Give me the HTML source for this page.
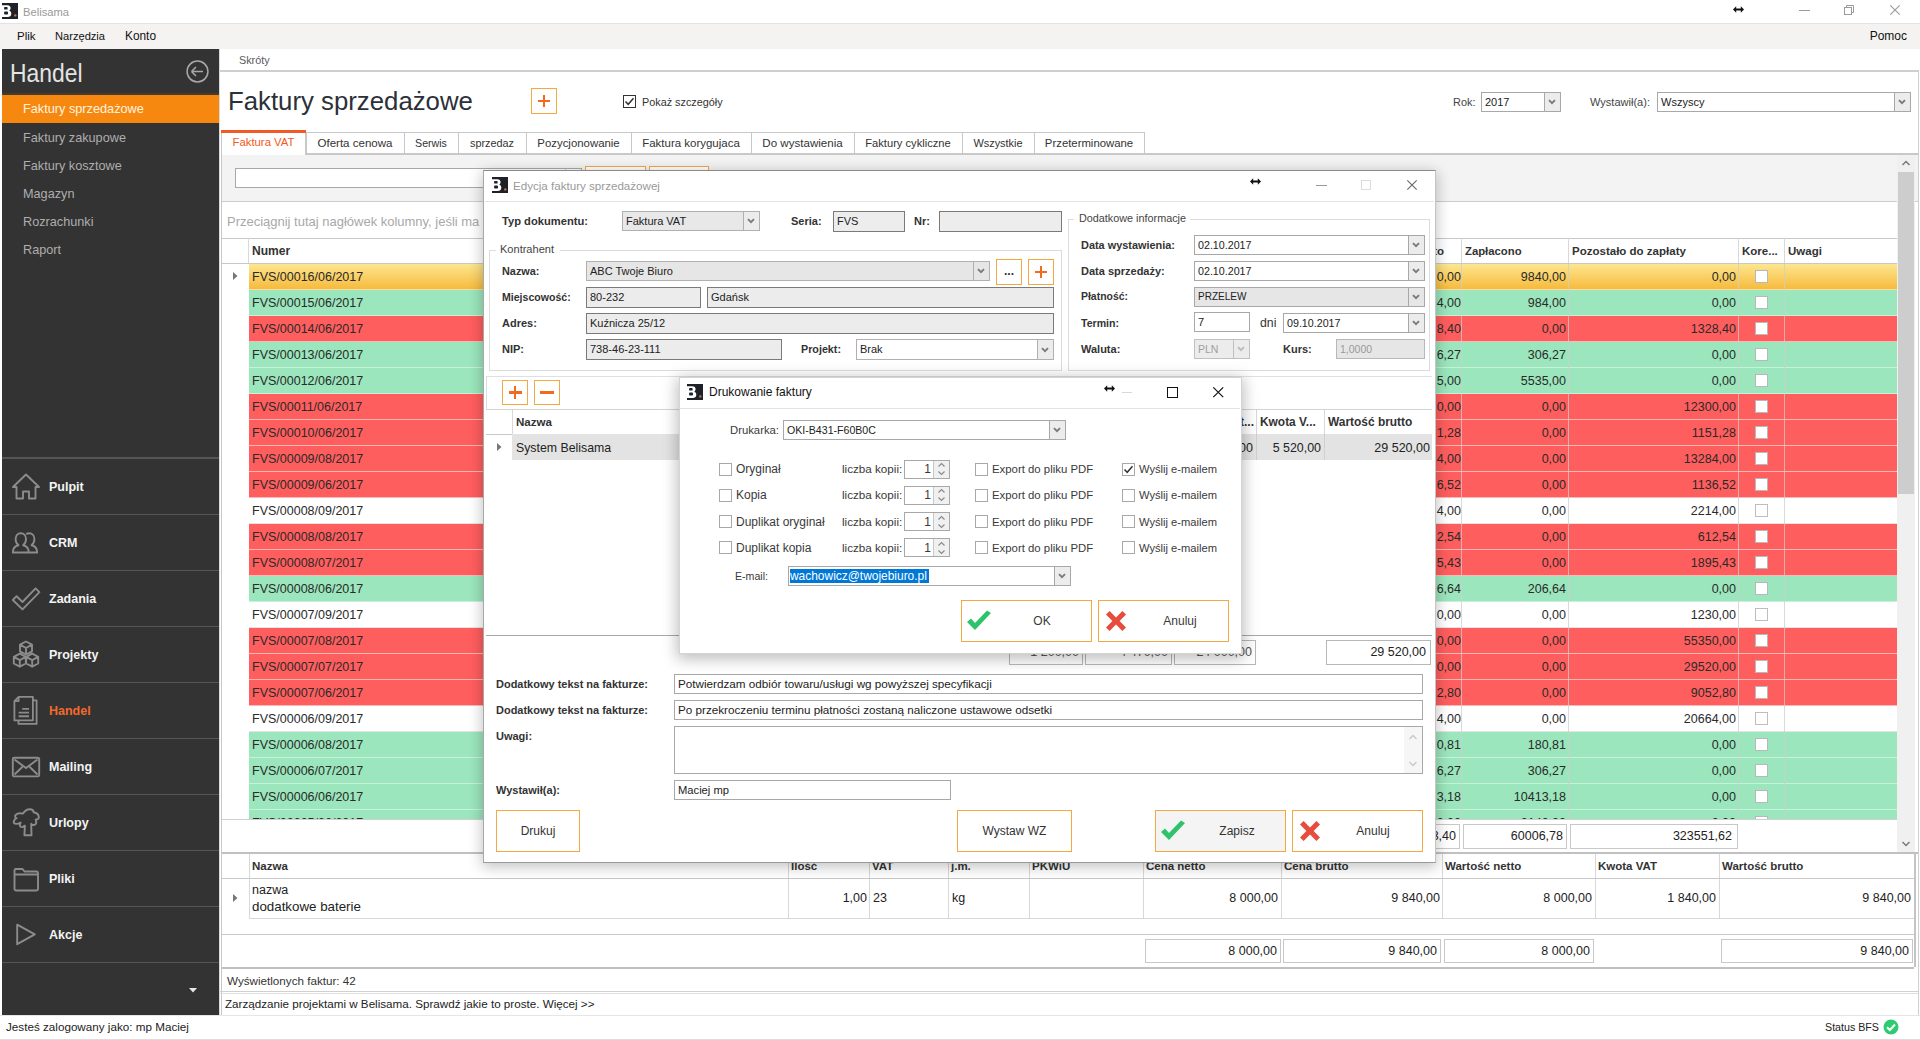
<!DOCTYPE html>
<html><head><meta charset="utf-8"><title>Belisama</title>
<style>
html,body{margin:0;padding:0;}
body{width:1920px;height:1040px;position:relative;overflow:hidden;background:#fff;font-family:"Liberation Sans", sans-serif;}
.r{position:absolute;}
.t{position:absolute;white-space:nowrap;font-family:"Liberation Sans", sans-serif;}
svg.r{overflow:visible;}
</style></head><body>
<div class="r" style="left:0px;top:0px;width:1920px;height:24px;background:#fff;"></div><div class="r" style="left:0px;top:23px;width:1920px;height:1px;background:#e3e3e3;"></div><svg class="r" style="left:2px;top:3px" width="16" height="16" viewBox="0 0 16 16"><rect width="16" height="16" fill="#1f2128"/><path d="M0 2.2 H5.2 C7.5 2.2 8.6 3.4 8.6 5 C8.6 6.2 8 7.1 7.1 7.6 C8.5 8 9.3 9.2 9.3 10.7 C9.3 12.8 7.8 13.9 5.6 13.9 H0 Z" fill="#fff"/><rect x="2.1" y="4" width="3.5" height="2.6" rx="0.7" fill="#1f2128"/><rect x="2.1" y="8.6" width="3.9" height="2.9" rx="0.8" fill="#1f2128"/><circle cx="13.3" cy="12.4" r="1.2" fill="#d0704a"/></svg><div class="t" style="left:23px;top:2.0px;height:20px;line-height:20px;font-size:11.18px;color:#9a9a9a;">Belisama</div><svg class="r" style="left:1733px;top:5.5px" width="11" height="7" viewBox="0 0 11 7"><path d="M0 3.5 L3.2 0.3 V2.4 H7.8 V0.3 L11 3.5 L7.8 6.7 V4.6 H3.2 V6.7 Z" fill="#111"/></svg><div class="r" style="left:1799px;top:10px;width:11px;height:1px;background:#9a9a9a;"></div><svg class="r" style="left:1844px;top:5px" width="10" height="10" viewBox="0 0 10 10"><rect x="0.5" y="2.5" width="7" height="7" fill="none" stroke="#9a9a9a"/><path d="M2.5 2.5 V0.5 H9.5 V7.5 H7.5" fill="none" stroke="#9a9a9a"/></svg><svg class="r" style="left:1890px;top:5px" width="10" height="10" viewBox="0 0 10 10"><path d="M0.3 0.3 L9.7 9.7 M9.7 0.3 L0.3 9.7" stroke="#9a9a9a" stroke-width="1.1"/></svg><div class="r" style="left:0px;top:24px;width:1920px;height:25px;background:#f4f3f1;"></div><div class="t" style="left:17px;top:26.0px;height:20px;line-height:20px;font-size:11.48px;color:#111;">Plik</div><div class="t" style="left:55px;top:26.0px;height:20px;line-height:20px;font-size:11.11px;color:#111;">Narzędzia</div><div class="t" style="left:125px;top:26.0px;height:20px;line-height:20px;font-size:11.86px;color:#111;">Konto</div><div class="t" style="right:13px;top:26.0px;height:20px;line-height:20px;font-size:12px;color:#111;">Pomoc</div><div class="r" style="left:2px;top:49px;width:217px;height:967px;background:#333333;"></div><div class="t" style="left:9.5px;top:58.0px;height:30px;line-height:30px;font-size:25px;color:#e4e4e4;transform:scaleX(0.915);transform-origin:0 0;">Handel</div><svg class="r" style="left:186px;top:60px" width="23" height="23" viewBox="0 0 23 23"><circle cx="11.5" cy="11.5" r="10.4" fill="none" stroke="#a8a8a8" stroke-width="1.5"/><path d="M5.5 11.5 H17 M5.5 11.5 L10 7 M5.5 11.5 L10 16" fill="none" stroke="#a8a8a8" stroke-width="1.5"/></svg><div class="r" style="left:2px;top:93px;width:217px;height:2px;background:#4a3a2e;"></div><div class="r" style="left:2px;top:95px;width:217px;height:28px;background:#f7880f;"></div><div class="t" style="left:23px;top:99.0px;height:20px;line-height:20px;font-size:12.73px;color:#fff4e0;">Faktury sprzedażowe</div><div class="t" style="left:23px;top:128.0px;height:20px;line-height:20px;font-size:12.7px;color:#aeaeae;">Faktury zakupowe</div><div class="t" style="left:23px;top:156.0px;height:20px;line-height:20px;font-size:12.7px;color:#aeaeae;">Faktury kosztowe</div><div class="t" style="left:23px;top:184.0px;height:20px;line-height:20px;font-size:12.7px;color:#aeaeae;">Magazyn</div><div class="t" style="left:23px;top:212.0px;height:20px;line-height:20px;font-size:12.7px;color:#aeaeae;">Rozrachunki</div><div class="t" style="left:23px;top:240.0px;height:20px;line-height:20px;font-size:12.7px;color:#aeaeae;">Raport</div><div class="r" style="left:2px;top:457px;width:217px;height:2px;background:#555555;"></div><svg class="r" style="left:12px;top:472px" width="28" height="28" viewBox="0 0 28 28"><path d="M14 2.5 L1 15 H4.5 V26.5 H11 V19.5 H17 V26.5 H23.5 V15 H27 Z" fill="none" stroke="#8c8c8c" stroke-width="1.9" stroke-linejoin="round"/></svg><div class="t" style="left:49px;top:477.0px;height:20px;line-height:20px;font-size:12.5px;color:#f4f4f4;font-weight:bold;">Pulpit</div><div class="r" style="left:2px;top:514px;width:217px;height:1px;background:#555555;"></div><svg class="r" style="left:12px;top:528px" width="28" height="28" viewBox="0 0 28 28"><path d="M0.8 24.5 C0.8 20 3 18 6.5 17.2 C4.6 15.8 3.6 13.8 3.6 11.2 C3.6 7.6 5.8 5.2 8.8 5.2 C11.8 5.2 14 7.6 14 11.2 C14 13.8 13 15.8 11.1 17.2 C14.6 18 16.8 20 16.8 24.5 Z" fill="none" stroke="#8c8c8c" stroke-width="1.9" stroke-linejoin="round"/><path d="M14.2 6.2 C15 5.5 16 5.2 17.2 5.2 C20.2 5.2 22.4 7.6 22.4 11.2 C22.4 13.8 21.4 15.8 19.5 17.2 C23 18 25.2 20 25.2 24.5 H16.8" fill="none" stroke="#8c8c8c" stroke-width="1.9" stroke-linejoin="round"/></svg><div class="t" style="left:49px;top:533.0px;height:20px;line-height:20px;font-size:12.5px;color:#f4f4f4;font-weight:bold;">CRM</div><div class="r" style="left:2px;top:570px;width:217px;height:1px;background:#555555;"></div><svg class="r" style="left:12px;top:584px" width="28" height="28" viewBox="0 0 28 28"><path d="M0.8 16 L4.6 12.2 L10.5 18 L23.6 4.4 L27.4 8.2 L10.5 25.4 Z" fill="none" stroke="#8c8c8c" stroke-width="1.9" stroke-linejoin="round"/></svg><div class="t" style="left:49px;top:589.0px;height:20px;line-height:20px;font-size:12.5px;color:#f4f4f4;font-weight:bold;">Zadania</div><div class="r" style="left:2px;top:626px;width:217px;height:1px;background:#555555;"></div><svg class="r" style="left:12px;top:640px" width="28" height="28" viewBox="0 0 28 28"><path d="M14 1.5 L20 4.7 V11.3 L14 14.5 L8 11.3 V4.7 Z M8 4.7 L14 8 L20 4.7 M14 8 V14.5 M7.8 13.7 L13.8 16.9 V23.5 L7.8 26.7 L1.7999999999999998 23.5 V16.9 Z M1.7999999999999998 16.9 L7.8 20.2 L13.8 16.9 M7.8 20.2 V26.7 M20.2 13.7 L26.2 16.9 V23.5 L20.2 26.7 L14.2 23.5 V16.9 Z M14.2 16.9 L20.2 20.2 L26.2 16.9 M20.2 20.2 V26.7" fill="none" stroke="#8c8c8c" stroke-width="1.9" stroke-linejoin="round"/></svg><div class="t" style="left:49px;top:645.0px;height:20px;line-height:20px;font-size:12.5px;color:#f4f4f4;font-weight:bold;">Projekty</div><div class="r" style="left:2px;top:682px;width:217px;height:1px;background:#555555;"></div><svg class="r" style="left:12px;top:696px" width="28" height="28" viewBox="0 0 28 28"><path d="M6.6 0.9 H20.9 V24.4 H2.4 V5.1 Z M2.4 5.1 H6.6 V0.9" fill="none" stroke="#8c8c8c" stroke-width="1.8" stroke-linejoin="round"/><path d="M20.9 4.3 H24.6 V27.9 H6.5 V24.4" fill="none" stroke="#8c8c8c" stroke-width="1.8" stroke-linejoin="round"/><path d="M10.2 12.9 H17 M6.6 16.6 H17 M6.6 20.3 H17" stroke="#8c8c8c" stroke-width="1.9"/></svg><div class="t" style="left:49px;top:701.0px;height:20px;line-height:20px;font-size:12.5px;color:#f26a2a;font-weight:bold;">Handel</div><div class="r" style="left:2px;top:738px;width:217px;height:1px;background:#555555;"></div><svg class="r" style="left:12px;top:752px" width="28" height="28" viewBox="0 0 28 28"><rect x="0.8" y="5.8" width="26.4" height="18.6" rx="1.5" fill="none" stroke="#8c8c8c" stroke-width="1.9"/><path d="M2.5 7.5 L14 16 L25.5 7.5 M2.5 22.5 L10.5 14.8 M25.5 22.5 L17.5 14.8" fill="none" stroke="#8c8c8c" stroke-width="1.9"/></svg><div class="t" style="left:49px;top:757.0px;height:20px;line-height:20px;font-size:12.5px;color:#f4f4f4;font-weight:bold;">Mailing</div><div class="r" style="left:2px;top:794px;width:217px;height:1px;background:#555555;"></div><svg class="r" style="left:12px;top:808px" width="28" height="28" viewBox="0 0 28 28"><path d="M12.4 27.2 L12.9 17.6 C11.2 18.8 9.4 19.6 8.4 18.6 C7.4 17.4 7.8 15.8 8.6 14.6 C6.2 15.8 3.2 16.2 2 15 C1 13.6 2.4 11.2 4.6 10.2 C3 9.6 2.6 8 3.6 7 C5.2 5.4 8.2 5 11 5.6 C12.6 3 15 1.2 17.6 1.2 C20 1.2 21.6 2.6 21.6 4.2 C24.2 4.6 26.6 6.6 26.8 9 C27 11 25.2 11.6 23.6 11.6 C24.6 13.2 24.6 15.6 23 16.6 C21.6 17.6 20.2 16.8 19.2 15.8 L19.5 27.2 Z" fill="none" stroke="#8c8c8c" stroke-width="1.9" stroke-linejoin="round"/></svg><div class="t" style="left:49px;top:813.0px;height:20px;line-height:20px;font-size:12.5px;color:#f4f4f4;font-weight:bold;">Urlopy</div><div class="r" style="left:2px;top:850px;width:217px;height:1px;background:#555555;"></div><svg class="r" style="left:12px;top:864px" width="28" height="28" viewBox="0 0 28 28"><path d="M2.5 6.5 Q2.5 5 4 5 H10.5 L12.5 7.5 H24.5 Q26 7.5 26 9 V25 Q26 26.5 24.5 26.5 H4 Q2.5 26.5 2.5 25 Z M2.5 10.5 H26" fill="none" stroke="#8c8c8c" stroke-width="1.9" stroke-linejoin="round"/></svg><div class="t" style="left:49px;top:869.0px;height:20px;line-height:20px;font-size:12.5px;color:#f4f4f4;font-weight:bold;">Pliki</div><div class="r" style="left:2px;top:906px;width:217px;height:1px;background:#555555;"></div><svg class="r" style="left:12px;top:920px" width="28" height="28" viewBox="0 0 28 28"><path d="M5.2 4.6 L22.8 14.4 L5.2 24.2 Z" fill="none" stroke="#8c8c8c" stroke-width="1.9" stroke-linejoin="round"/></svg><div class="t" style="left:49px;top:925.0px;height:20px;line-height:20px;font-size:12.5px;color:#f4f4f4;font-weight:bold;">Akcje</div><div class="r" style="left:2px;top:962px;width:217px;height:1px;background:#555555;"></div><svg class="r" style="left:189px;top:988px" width="8" height="5" viewBox="0 0 8 5"><path d="M0 0 H8 L4 4.5 Z" fill="#e8e8e8"/></svg><div class="r" style="left:0px;top:1015px;width:1920px;height:25px;background:#fff;"></div><div class="r" style="left:0px;top:1015px;width:1920px;height:1px;background:#e6e6e6;"></div><div class="r" style="left:0px;top:1039px;width:1920px;height:1px;background:#dcdcdc;"></div><div class="t" style="left:6px;top:1017.0px;height:20px;line-height:20px;font-size:11.68px;color:#222;">Jesteś zalogowany jako: mp Maciej</div><div class="t" style="right:41px;top:1017.0px;height:20px;line-height:20px;font-size:10.68px;color:#222;">Status BFS</div><svg class="r" style="left:1883px;top:1019px" width="16" height="16" viewBox="0 0 16 16"><circle cx="8" cy="8" r="7.5" fill="#2ecc71"/><path d="M4 8.2 L6.8 11 L12 5.5" fill="none" stroke="#fff" stroke-width="2"/></svg><div class="r" style="left:219px;top:49px;width:1701px;height:966px;background:#fff;"></div><div class="r" style="left:219px;top:49px;width:1px;height:966px;background:#d9d9d9;"></div><div class="t" style="left:239px;top:50.0px;height:20px;line-height:20px;font-size:10.8px;color:#5a5a5a;">Skróty</div><div class="r" style="left:220px;top:70px;width:1698px;height:2px;background:#cfcfcf;"></div><div class="r" style="left:1918px;top:70px;width:1px;height:945px;background:#d0d0d0;"></div><div class="t" style="left:228px;top:84.0px;height:34px;line-height:34px;font-size:25.78px;color:#2c3038;">Faktury sprzedażowe</div><div class="r" style="left:531px;top:88px;width:26px;height:26px;background:#fff;border:1px solid #f2a941;box-sizing:border-box;"></div><div class="r" style="left:538.0px;top:99.9px;width:12.0px;height:2.1999999999999886px;background:#f26a1b;"></div><div class="r" style="left:542.9px;top:95.0px;width:2.2000000000000455px;height:12.0px;background:#f26a1b;"></div><div class="r" style="left:623px;top:95px;width:13px;height:13px;background:#fff;border:1px solid #333;box-sizing:border-box;"></div><svg class="r" style="left:623px;top:95px" width="13" height="13" viewBox="0 0 13 13"><path d="M2.5 6.5 L5.2 9.3 L10.5 3.2" fill="none" stroke="#333" stroke-width="1.5"/></svg><div class="t" style="left:642px;top:91.5px;height:20px;line-height:20px;font-size:10.84px;color:#333;">Pokaż szczegóły</div><div class="t" style="left:1453px;top:91.5px;height:20px;line-height:20px;font-size:10.94px;color:#444;">Rok:</div><div class="r" style="left:1481px;top:92px;width:80px;height:20px;background:#fff;border:1px solid #a8a8a8;box-sizing:border-box;"></div><div class="r" style="left:1544px;top:93px;width:16px;height:18px;background:#ececec;border-left:1px solid #a8a8a8;box-sizing:border-box;"></div><svg class="r" style="left:1547.0px;top:98.0px" width="10" height="8" viewBox="0 0 10 8"><path d="M2 2.2 L5 5.2 L8 2.2" fill="none" stroke="#7a7a7a" stroke-width="1.9"/></svg><div class="t" style="left:1485px;top:92.0px;height:20px;line-height:20px;font-size:11px;color:#222;">2017</div><div class="t" style="left:1590px;top:91.5px;height:20px;line-height:20px;font-size:11.04px;color:#444;">Wystawił(a):</div><div class="r" style="left:1657px;top:92px;width:254px;height:20px;background:#fff;border:1px solid #a8a8a8;box-sizing:border-box;"></div><div class="r" style="left:1894px;top:93px;width:16px;height:18px;background:#ececec;border-left:1px solid #a8a8a8;box-sizing:border-box;"></div><svg class="r" style="left:1897.0px;top:98.0px" width="10" height="8" viewBox="0 0 10 8"><path d="M2 2.2 L5 5.2 L8 2.2" fill="none" stroke="#7a7a7a" stroke-width="1.9"/></svg><div class="t" style="left:1661px;top:92.0px;height:20px;line-height:20px;font-size:11px;color:#222;">Wszyscy</div><div class="r" style="left:221px;top:130px;width:85px;height:25px;background:#fff;border-left:1px solid #c8c8c8;border-right:1px solid #c8c8c8;box-sizing:border-box;"></div><div class="r" style="left:221px;top:130px;width:85px;height:3px;background:#f15a22;"></div><div class="t" style="left:263.5px;top:132.0px;height:20px;line-height:20px;font-size:11.35px;color:#f15a22;transform:translateX(-50%);">Faktura VAT</div><div class="r" style="left:306px;top:132px;width:99px;height:22px;background:#fff;border:1px solid #c8c8c8;border-bottom:none;box-sizing:border-box;"></div><div class="t" style="left:355.0px;top:133.0px;height:20px;line-height:20px;font-size:11.56px;color:#333;transform:translateX(-50%);">Oferta cenowa</div><div class="r" style="left:404px;top:132px;width:55px;height:22px;background:#fff;border:1px solid #c8c8c8;border-bottom:none;box-sizing:border-box;"></div><div class="t" style="left:431.0px;top:133.0px;height:20px;line-height:20px;font-size:10.63px;color:#333;transform:translateX(-50%);">Serwis</div><div class="r" style="left:458px;top:132px;width:69px;height:22px;background:#fff;border:1px solid #c8c8c8;border-bottom:none;box-sizing:border-box;"></div><div class="t" style="left:492.0px;top:133.0px;height:20px;line-height:20px;font-size:10.84px;color:#333;transform:translateX(-50%);">sprzedaz</div><div class="r" style="left:526px;top:132px;width:106px;height:22px;background:#fff;border:1px solid #c8c8c8;border-bottom:none;box-sizing:border-box;"></div><div class="t" style="left:578.5px;top:133.0px;height:20px;line-height:20px;font-size:11.42px;color:#333;transform:translateX(-50%);">Pozycjonowanie</div><div class="r" style="left:631px;top:132px;width:121px;height:22px;background:#fff;border:1px solid #c8c8c8;border-bottom:none;box-sizing:border-box;"></div><div class="t" style="left:691.0px;top:133.0px;height:20px;line-height:20px;font-size:11.48px;color:#333;transform:translateX(-50%);">Faktura korygujaca</div><div class="r" style="left:751px;top:132px;width:104px;height:22px;background:#fff;border:1px solid #c8c8c8;border-bottom:none;box-sizing:border-box;"></div><div class="t" style="left:802.5px;top:133.0px;height:20px;line-height:20px;font-size:11.57px;color:#333;transform:translateX(-50%);">Do wystawienia</div><div class="r" style="left:854px;top:132px;width:109px;height:22px;background:#fff;border:1px solid #c8c8c8;border-bottom:none;box-sizing:border-box;"></div><div class="t" style="left:908.0px;top:133.0px;height:20px;line-height:20px;font-size:11.15px;color:#333;transform:translateX(-50%);">Faktury cykliczne</div><div class="r" style="left:962px;top:132px;width:73px;height:22px;background:#fff;border:1px solid #c8c8c8;border-bottom:none;box-sizing:border-box;"></div><div class="t" style="left:998.0px;top:133.0px;height:20px;line-height:20px;font-size:10.93px;color:#333;transform:translateX(-50%);">Wszystkie</div><div class="r" style="left:1034px;top:132px;width:111px;height:22px;background:#fff;border:1px solid #c8c8c8;border-bottom:none;box-sizing:border-box;"></div><div class="t" style="left:1089.0px;top:133.0px;height:20px;line-height:20px;font-size:11.35px;color:#333;transform:translateX(-50%);">Przeterminowane</div><div class="r" style="left:306px;top:153px;width:1612px;height:2px;background:#c8c8c8;"></div><div class="r" style="left:221px;top:155px;width:1px;height:860px;background:#c8c8c8;"></div><div class="r" style="left:222px;top:155px;width:1696px;height:46px;background:#f3f3f3;"></div><div class="r" style="left:222px;top:201px;width:1696px;height:1px;background:#cdcdcd;"></div><div class="r" style="left:235px;top:168px;width:347px;height:20px;background:#fff;border:1px solid #a8a8a8;box-sizing:border-box;"></div><div class="r" style="left:565px;top:169px;width:1px;height:18px;background:#c8c8c8;"></div><div class="r" style="left:585px;top:166px;width:61px;height:24px;background:#fff;border:1px solid #f2a941;box-sizing:border-box;"></div><div class="r" style="left:649px;top:166px;width:60px;height:24px;background:#fff;border:1px solid #f2a941;box-sizing:border-box;"></div><div class="t" style="left:227px;top:212.0px;height:20px;line-height:20px;font-size:12.99px;color:#a8a8a8;">Przeciągnij tutaj nagłówek kolumny, jeśli ma</div><div class="r" style="left:222px;top:238px;width:1675px;height:1px;background:#c8c8c8;"></div><div class="t" style="left:252px;top:241.0px;height:20px;line-height:20px;font-size:12.06px;color:#333;font-weight:bold;">Numer</div><div class="r" style="left:248px;top:238px;width:1px;height:25px;background:#d8d8d8;"></div><div class="r" style="left:1461px;top:238px;width:1px;height:25px;background:#d8d8d8;"></div><div class="r" style="left:1568px;top:238px;width:1px;height:25px;background:#d8d8d8;"></div><div class="r" style="left:1738px;top:238px;width:1px;height:25px;background:#d8d8d8;"></div><div class="r" style="left:1784px;top:238px;width:1px;height:25px;background:#d8d8d8;"></div><div class="t" style="right:476px;top:241.0px;height:20px;line-height:20px;font-size:11.5px;color:#333;font-weight:bold;">Wartość brutto</div><div class="t" style="left:1465px;top:241.0px;height:20px;line-height:20px;font-size:11.32px;color:#333;font-weight:bold;">Zapłacono</div><div class="t" style="left:1572px;top:241.0px;height:20px;line-height:20px;font-size:11.53px;color:#333;font-weight:bold;">Pozostało do zapłaty</div><div class="t" style="left:1742px;top:241.0px;height:20px;line-height:20px;font-size:11.5px;color:#333;font-weight:bold;">Kore...</div><div class="t" style="left:1788px;top:241.0px;height:20px;line-height:20px;font-size:11.5px;color:#333;font-weight:bold;">Uwagi</div><div class="r" style="left:222px;top:263px;width:1675px;height:1px;background:#c8c8c8;"></div><div class="r" style="left:222px;top:264px;width:1675px;height:555px;overflow:hidden;"><div class="r" style="left:27px;top:0px;width:1648px;height:26px;background:linear-gradient(#fde68f,#f6b93a);"></div><div class="r" style="left:27px;top:25px;width:1648px;height:1px;background:rgba(255,255,255,0.5);"></div><div class="t" style="left:30px;top:3px;height:20px;line-height:20px;font-size:12.5px;color:#2a2a2a;">FVS/00016/06/2017</div><div class="t" style="left:1129px;width:110px;text-align:right;top:3px;height:20px;line-height:20px;font-size:12.5px;color:#2a2a2a;">0,00</div><div class="t" style="left:1239px;width:105px;text-align:right;top:3px;height:20px;line-height:20px;font-size:12.5px;color:#2a2a2a;">9840,00</div><div class="t" style="left:1346px;width:168px;text-align:right;top:3px;height:20px;line-height:20px;font-size:12.5px;color:#2a2a2a;">0,00</div><div class="r" style="left:1533px;top:6px;width:13px;height:13px;background:#fff;border:1px solid #b8b8b8;box-sizing:border-box;"></div><div class="r" style="left:1239px;top:0px;width:1px;height:26px;background:rgba(205,205,205,0.75);"></div><div class="r" style="left:1346px;top:0px;width:1px;height:26px;background:rgba(205,205,205,0.75);"></div><div class="r" style="left:1516px;top:0px;width:1px;height:26px;background:rgba(205,205,205,0.75);"></div><div class="r" style="left:1562px;top:0px;width:1px;height:26px;background:rgba(205,205,205,0.75);"></div><div class="r" style="left:27px;top:26px;width:1648px;height:26px;background:#9be6bc;"></div><div class="r" style="left:27px;top:51px;width:1648px;height:1px;background:rgba(255,255,255,0.45);"></div><div class="t" style="left:30px;top:29px;height:20px;line-height:20px;font-size:12.5px;color:#2a2a2a;">FVS/00015/06/2017</div><div class="t" style="left:1129px;width:110px;text-align:right;top:29px;height:20px;line-height:20px;font-size:12.5px;color:#2a2a2a;">4,00</div><div class="t" style="left:1239px;width:105px;text-align:right;top:29px;height:20px;line-height:20px;font-size:12.5px;color:#2a2a2a;">984,00</div><div class="t" style="left:1346px;width:168px;text-align:right;top:29px;height:20px;line-height:20px;font-size:12.5px;color:#2a2a2a;">0,00</div><div class="r" style="left:1533px;top:32px;width:13px;height:13px;background:#fff;border:1px solid #b8b8b8;box-sizing:border-box;"></div><div class="r" style="left:1239px;top:26px;width:1px;height:26px;background:rgba(205,205,205,0.75);"></div><div class="r" style="left:1346px;top:26px;width:1px;height:26px;background:rgba(205,205,205,0.75);"></div><div class="r" style="left:1516px;top:26px;width:1px;height:26px;background:rgba(205,205,205,0.75);"></div><div class="r" style="left:1562px;top:26px;width:1px;height:26px;background:rgba(205,205,205,0.75);"></div><div class="r" style="left:27px;top:52px;width:1648px;height:26px;background:#ff5e5e;"></div><div class="r" style="left:27px;top:77px;width:1648px;height:1px;background:rgba(255,255,255,0.55);"></div><div class="t" style="left:30px;top:55px;height:20px;line-height:20px;font-size:12.5px;color:#2a2a2a;">FVS/00014/06/2017</div><div class="t" style="left:1129px;width:110px;text-align:right;top:55px;height:20px;line-height:20px;font-size:12.5px;color:#2a2a2a;">8,40</div><div class="t" style="left:1239px;width:105px;text-align:right;top:55px;height:20px;line-height:20px;font-size:12.5px;color:#2a2a2a;">0,00</div><div class="t" style="left:1346px;width:168px;text-align:right;top:55px;height:20px;line-height:20px;font-size:12.5px;color:#2a2a2a;">1328,40</div><div class="r" style="left:1533px;top:58px;width:13px;height:13px;background:#fff;border:1px solid #b8b8b8;box-sizing:border-box;"></div><div class="r" style="left:1239px;top:52px;width:1px;height:26px;background:rgba(205,205,205,0.75);"></div><div class="r" style="left:1346px;top:52px;width:1px;height:26px;background:rgba(205,205,205,0.75);"></div><div class="r" style="left:1516px;top:52px;width:1px;height:26px;background:rgba(205,205,205,0.75);"></div><div class="r" style="left:1562px;top:52px;width:1px;height:26px;background:rgba(205,205,205,0.75);"></div><div class="r" style="left:27px;top:78px;width:1648px;height:26px;background:#9be6bc;"></div><div class="r" style="left:27px;top:103px;width:1648px;height:1px;background:rgba(255,255,255,0.45);"></div><div class="t" style="left:30px;top:81px;height:20px;line-height:20px;font-size:12.5px;color:#2a2a2a;">FVS/00013/06/2017</div><div class="t" style="left:1129px;width:110px;text-align:right;top:81px;height:20px;line-height:20px;font-size:12.5px;color:#2a2a2a;">6,27</div><div class="t" style="left:1239px;width:105px;text-align:right;top:81px;height:20px;line-height:20px;font-size:12.5px;color:#2a2a2a;">306,27</div><div class="t" style="left:1346px;width:168px;text-align:right;top:81px;height:20px;line-height:20px;font-size:12.5px;color:#2a2a2a;">0,00</div><div class="r" style="left:1533px;top:84px;width:13px;height:13px;background:#fff;border:1px solid #b8b8b8;box-sizing:border-box;"></div><div class="r" style="left:1239px;top:78px;width:1px;height:26px;background:rgba(205,205,205,0.75);"></div><div class="r" style="left:1346px;top:78px;width:1px;height:26px;background:rgba(205,205,205,0.75);"></div><div class="r" style="left:1516px;top:78px;width:1px;height:26px;background:rgba(205,205,205,0.75);"></div><div class="r" style="left:1562px;top:78px;width:1px;height:26px;background:rgba(205,205,205,0.75);"></div><div class="r" style="left:27px;top:104px;width:1648px;height:26px;background:#9be6bc;"></div><div class="r" style="left:27px;top:129px;width:1648px;height:1px;background:rgba(255,255,255,0.45);"></div><div class="t" style="left:30px;top:107px;height:20px;line-height:20px;font-size:12.5px;color:#2a2a2a;">FVS/00012/06/2017</div><div class="t" style="left:1129px;width:110px;text-align:right;top:107px;height:20px;line-height:20px;font-size:12.5px;color:#2a2a2a;">5,00</div><div class="t" style="left:1239px;width:105px;text-align:right;top:107px;height:20px;line-height:20px;font-size:12.5px;color:#2a2a2a;">5535,00</div><div class="t" style="left:1346px;width:168px;text-align:right;top:107px;height:20px;line-height:20px;font-size:12.5px;color:#2a2a2a;">0,00</div><div class="r" style="left:1533px;top:110px;width:13px;height:13px;background:#fff;border:1px solid #b8b8b8;box-sizing:border-box;"></div><div class="r" style="left:1239px;top:104px;width:1px;height:26px;background:rgba(205,205,205,0.75);"></div><div class="r" style="left:1346px;top:104px;width:1px;height:26px;background:rgba(205,205,205,0.75);"></div><div class="r" style="left:1516px;top:104px;width:1px;height:26px;background:rgba(205,205,205,0.75);"></div><div class="r" style="left:1562px;top:104px;width:1px;height:26px;background:rgba(205,205,205,0.75);"></div><div class="r" style="left:27px;top:130px;width:1648px;height:26px;background:#ff5e5e;"></div><div class="r" style="left:27px;top:155px;width:1648px;height:1px;background:rgba(255,255,255,0.55);"></div><div class="t" style="left:30px;top:133px;height:20px;line-height:20px;font-size:12.5px;color:#2a2a2a;">FVS/00011/06/2017</div><div class="t" style="left:1129px;width:110px;text-align:right;top:133px;height:20px;line-height:20px;font-size:12.5px;color:#2a2a2a;">0,00</div><div class="t" style="left:1239px;width:105px;text-align:right;top:133px;height:20px;line-height:20px;font-size:12.5px;color:#2a2a2a;">0,00</div><div class="t" style="left:1346px;width:168px;text-align:right;top:133px;height:20px;line-height:20px;font-size:12.5px;color:#2a2a2a;">12300,00</div><div class="r" style="left:1533px;top:136px;width:13px;height:13px;background:#fff;border:1px solid #b8b8b8;box-sizing:border-box;"></div><div class="r" style="left:1239px;top:130px;width:1px;height:26px;background:rgba(205,205,205,0.75);"></div><div class="r" style="left:1346px;top:130px;width:1px;height:26px;background:rgba(205,205,205,0.75);"></div><div class="r" style="left:1516px;top:130px;width:1px;height:26px;background:rgba(205,205,205,0.75);"></div><div class="r" style="left:1562px;top:130px;width:1px;height:26px;background:rgba(205,205,205,0.75);"></div><div class="r" style="left:27px;top:156px;width:1648px;height:26px;background:#ff5e5e;"></div><div class="r" style="left:27px;top:181px;width:1648px;height:1px;background:rgba(255,255,255,0.55);"></div><div class="t" style="left:30px;top:159px;height:20px;line-height:20px;font-size:12.5px;color:#2a2a2a;">FVS/00010/06/2017</div><div class="t" style="left:1129px;width:110px;text-align:right;top:159px;height:20px;line-height:20px;font-size:12.5px;color:#2a2a2a;">1,28</div><div class="t" style="left:1239px;width:105px;text-align:right;top:159px;height:20px;line-height:20px;font-size:12.5px;color:#2a2a2a;">0,00</div><div class="t" style="left:1346px;width:168px;text-align:right;top:159px;height:20px;line-height:20px;font-size:12.5px;color:#2a2a2a;">1151,28</div><div class="r" style="left:1533px;top:162px;width:13px;height:13px;background:#fff;border:1px solid #b8b8b8;box-sizing:border-box;"></div><div class="r" style="left:1239px;top:156px;width:1px;height:26px;background:rgba(205,205,205,0.75);"></div><div class="r" style="left:1346px;top:156px;width:1px;height:26px;background:rgba(205,205,205,0.75);"></div><div class="r" style="left:1516px;top:156px;width:1px;height:26px;background:rgba(205,205,205,0.75);"></div><div class="r" style="left:1562px;top:156px;width:1px;height:26px;background:rgba(205,205,205,0.75);"></div><div class="r" style="left:27px;top:182px;width:1648px;height:26px;background:#ff5e5e;"></div><div class="r" style="left:27px;top:207px;width:1648px;height:1px;background:rgba(255,255,255,0.55);"></div><div class="t" style="left:30px;top:185px;height:20px;line-height:20px;font-size:12.5px;color:#2a2a2a;">FVS/00009/08/2017</div><div class="t" style="left:1129px;width:110px;text-align:right;top:185px;height:20px;line-height:20px;font-size:12.5px;color:#2a2a2a;">4,00</div><div class="t" style="left:1239px;width:105px;text-align:right;top:185px;height:20px;line-height:20px;font-size:12.5px;color:#2a2a2a;">0,00</div><div class="t" style="left:1346px;width:168px;text-align:right;top:185px;height:20px;line-height:20px;font-size:12.5px;color:#2a2a2a;">13284,00</div><div class="r" style="left:1533px;top:188px;width:13px;height:13px;background:#fff;border:1px solid #b8b8b8;box-sizing:border-box;"></div><div class="r" style="left:1239px;top:182px;width:1px;height:26px;background:rgba(205,205,205,0.75);"></div><div class="r" style="left:1346px;top:182px;width:1px;height:26px;background:rgba(205,205,205,0.75);"></div><div class="r" style="left:1516px;top:182px;width:1px;height:26px;background:rgba(205,205,205,0.75);"></div><div class="r" style="left:1562px;top:182px;width:1px;height:26px;background:rgba(205,205,205,0.75);"></div><div class="r" style="left:27px;top:208px;width:1648px;height:26px;background:#ff5e5e;"></div><div class="r" style="left:27px;top:233px;width:1648px;height:1px;background:rgba(255,255,255,0.55);"></div><div class="t" style="left:30px;top:211px;height:20px;line-height:20px;font-size:12.5px;color:#2a2a2a;">FVS/00009/06/2017</div><div class="t" style="left:1129px;width:110px;text-align:right;top:211px;height:20px;line-height:20px;font-size:12.5px;color:#2a2a2a;">6,52</div><div class="t" style="left:1239px;width:105px;text-align:right;top:211px;height:20px;line-height:20px;font-size:12.5px;color:#2a2a2a;">0,00</div><div class="t" style="left:1346px;width:168px;text-align:right;top:211px;height:20px;line-height:20px;font-size:12.5px;color:#2a2a2a;">1136,52</div><div class="r" style="left:1533px;top:214px;width:13px;height:13px;background:#fff;border:1px solid #b8b8b8;box-sizing:border-box;"></div><div class="r" style="left:1239px;top:208px;width:1px;height:26px;background:rgba(205,205,205,0.75);"></div><div class="r" style="left:1346px;top:208px;width:1px;height:26px;background:rgba(205,205,205,0.75);"></div><div class="r" style="left:1516px;top:208px;width:1px;height:26px;background:rgba(205,205,205,0.75);"></div><div class="r" style="left:1562px;top:208px;width:1px;height:26px;background:rgba(205,205,205,0.75);"></div><div class="r" style="left:27px;top:234px;width:1648px;height:26px;background:#fff;"></div><div class="r" style="left:27px;top:259px;width:1648px;height:1px;background:#e4e4e4;"></div><div class="t" style="left:30px;top:237px;height:20px;line-height:20px;font-size:12.5px;color:#2a2a2a;">FVS/00008/09/2017</div><div class="t" style="left:1129px;width:110px;text-align:right;top:237px;height:20px;line-height:20px;font-size:12.5px;color:#2a2a2a;">4,00</div><div class="t" style="left:1239px;width:105px;text-align:right;top:237px;height:20px;line-height:20px;font-size:12.5px;color:#2a2a2a;">0,00</div><div class="t" style="left:1346px;width:168px;text-align:right;top:237px;height:20px;line-height:20px;font-size:12.5px;color:#2a2a2a;">2214,00</div><div class="r" style="left:1533px;top:240px;width:13px;height:13px;background:#fff;border:1px solid #bdbdbd;box-sizing:border-box;"></div><div class="r" style="left:1239px;top:234px;width:1px;height:26px;background:rgba(205,205,205,0.75);"></div><div class="r" style="left:1346px;top:234px;width:1px;height:26px;background:rgba(205,205,205,0.75);"></div><div class="r" style="left:1516px;top:234px;width:1px;height:26px;background:rgba(205,205,205,0.75);"></div><div class="r" style="left:1562px;top:234px;width:1px;height:26px;background:rgba(205,205,205,0.75);"></div><div class="r" style="left:27px;top:260px;width:1648px;height:26px;background:#ff5e5e;"></div><div class="r" style="left:27px;top:285px;width:1648px;height:1px;background:rgba(255,255,255,0.55);"></div><div class="t" style="left:30px;top:263px;height:20px;line-height:20px;font-size:12.5px;color:#2a2a2a;">FVS/00008/08/2017</div><div class="t" style="left:1129px;width:110px;text-align:right;top:263px;height:20px;line-height:20px;font-size:12.5px;color:#2a2a2a;">2,54</div><div class="t" style="left:1239px;width:105px;text-align:right;top:263px;height:20px;line-height:20px;font-size:12.5px;color:#2a2a2a;">0,00</div><div class="t" style="left:1346px;width:168px;text-align:right;top:263px;height:20px;line-height:20px;font-size:12.5px;color:#2a2a2a;">612,54</div><div class="r" style="left:1533px;top:266px;width:13px;height:13px;background:#fff;border:1px solid #b8b8b8;box-sizing:border-box;"></div><div class="r" style="left:1239px;top:260px;width:1px;height:26px;background:rgba(205,205,205,0.75);"></div><div class="r" style="left:1346px;top:260px;width:1px;height:26px;background:rgba(205,205,205,0.75);"></div><div class="r" style="left:1516px;top:260px;width:1px;height:26px;background:rgba(205,205,205,0.75);"></div><div class="r" style="left:1562px;top:260px;width:1px;height:26px;background:rgba(205,205,205,0.75);"></div><div class="r" style="left:27px;top:286px;width:1648px;height:26px;background:#ff5e5e;"></div><div class="r" style="left:27px;top:311px;width:1648px;height:1px;background:rgba(255,255,255,0.55);"></div><div class="t" style="left:30px;top:289px;height:20px;line-height:20px;font-size:12.5px;color:#2a2a2a;">FVS/00008/07/2017</div><div class="t" style="left:1129px;width:110px;text-align:right;top:289px;height:20px;line-height:20px;font-size:12.5px;color:#2a2a2a;">5,43</div><div class="t" style="left:1239px;width:105px;text-align:right;top:289px;height:20px;line-height:20px;font-size:12.5px;color:#2a2a2a;">0,00</div><div class="t" style="left:1346px;width:168px;text-align:right;top:289px;height:20px;line-height:20px;font-size:12.5px;color:#2a2a2a;">1895,43</div><div class="r" style="left:1533px;top:292px;width:13px;height:13px;background:#fff;border:1px solid #b8b8b8;box-sizing:border-box;"></div><div class="r" style="left:1239px;top:286px;width:1px;height:26px;background:rgba(205,205,205,0.75);"></div><div class="r" style="left:1346px;top:286px;width:1px;height:26px;background:rgba(205,205,205,0.75);"></div><div class="r" style="left:1516px;top:286px;width:1px;height:26px;background:rgba(205,205,205,0.75);"></div><div class="r" style="left:1562px;top:286px;width:1px;height:26px;background:rgba(205,205,205,0.75);"></div><div class="r" style="left:27px;top:312px;width:1648px;height:26px;background:#9be6bc;"></div><div class="r" style="left:27px;top:337px;width:1648px;height:1px;background:rgba(255,255,255,0.45);"></div><div class="t" style="left:30px;top:315px;height:20px;line-height:20px;font-size:12.5px;color:#2a2a2a;">FVS/00008/06/2017</div><div class="t" style="left:1129px;width:110px;text-align:right;top:315px;height:20px;line-height:20px;font-size:12.5px;color:#2a2a2a;">6,64</div><div class="t" style="left:1239px;width:105px;text-align:right;top:315px;height:20px;line-height:20px;font-size:12.5px;color:#2a2a2a;">206,64</div><div class="t" style="left:1346px;width:168px;text-align:right;top:315px;height:20px;line-height:20px;font-size:12.5px;color:#2a2a2a;">0,00</div><div class="r" style="left:1533px;top:318px;width:13px;height:13px;background:#fff;border:1px solid #b8b8b8;box-sizing:border-box;"></div><div class="r" style="left:1239px;top:312px;width:1px;height:26px;background:rgba(205,205,205,0.75);"></div><div class="r" style="left:1346px;top:312px;width:1px;height:26px;background:rgba(205,205,205,0.75);"></div><div class="r" style="left:1516px;top:312px;width:1px;height:26px;background:rgba(205,205,205,0.75);"></div><div class="r" style="left:1562px;top:312px;width:1px;height:26px;background:rgba(205,205,205,0.75);"></div><div class="r" style="left:27px;top:338px;width:1648px;height:26px;background:#fff;"></div><div class="r" style="left:27px;top:363px;width:1648px;height:1px;background:#e4e4e4;"></div><div class="t" style="left:30px;top:341px;height:20px;line-height:20px;font-size:12.5px;color:#2a2a2a;">FVS/00007/09/2017</div><div class="t" style="left:1129px;width:110px;text-align:right;top:341px;height:20px;line-height:20px;font-size:12.5px;color:#2a2a2a;">0,00</div><div class="t" style="left:1239px;width:105px;text-align:right;top:341px;height:20px;line-height:20px;font-size:12.5px;color:#2a2a2a;">0,00</div><div class="t" style="left:1346px;width:168px;text-align:right;top:341px;height:20px;line-height:20px;font-size:12.5px;color:#2a2a2a;">1230,00</div><div class="r" style="left:1533px;top:344px;width:13px;height:13px;background:#fff;border:1px solid #bdbdbd;box-sizing:border-box;"></div><div class="r" style="left:1239px;top:338px;width:1px;height:26px;background:rgba(205,205,205,0.75);"></div><div class="r" style="left:1346px;top:338px;width:1px;height:26px;background:rgba(205,205,205,0.75);"></div><div class="r" style="left:1516px;top:338px;width:1px;height:26px;background:rgba(205,205,205,0.75);"></div><div class="r" style="left:1562px;top:338px;width:1px;height:26px;background:rgba(205,205,205,0.75);"></div><div class="r" style="left:27px;top:364px;width:1648px;height:26px;background:#ff5e5e;"></div><div class="r" style="left:27px;top:389px;width:1648px;height:1px;background:rgba(255,255,255,0.55);"></div><div class="t" style="left:30px;top:367px;height:20px;line-height:20px;font-size:12.5px;color:#2a2a2a;">FVS/00007/08/2017</div><div class="t" style="left:1129px;width:110px;text-align:right;top:367px;height:20px;line-height:20px;font-size:12.5px;color:#2a2a2a;">0,00</div><div class="t" style="left:1239px;width:105px;text-align:right;top:367px;height:20px;line-height:20px;font-size:12.5px;color:#2a2a2a;">0,00</div><div class="t" style="left:1346px;width:168px;text-align:right;top:367px;height:20px;line-height:20px;font-size:12.5px;color:#2a2a2a;">55350,00</div><div class="r" style="left:1533px;top:370px;width:13px;height:13px;background:#fff;border:1px solid #b8b8b8;box-sizing:border-box;"></div><div class="r" style="left:1239px;top:364px;width:1px;height:26px;background:rgba(205,205,205,0.75);"></div><div class="r" style="left:1346px;top:364px;width:1px;height:26px;background:rgba(205,205,205,0.75);"></div><div class="r" style="left:1516px;top:364px;width:1px;height:26px;background:rgba(205,205,205,0.75);"></div><div class="r" style="left:1562px;top:364px;width:1px;height:26px;background:rgba(205,205,205,0.75);"></div><div class="r" style="left:27px;top:390px;width:1648px;height:26px;background:#ff5e5e;"></div><div class="r" style="left:27px;top:415px;width:1648px;height:1px;background:rgba(255,255,255,0.55);"></div><div class="t" style="left:30px;top:393px;height:20px;line-height:20px;font-size:12.5px;color:#2a2a2a;">FVS/00007/07/2017</div><div class="t" style="left:1129px;width:110px;text-align:right;top:393px;height:20px;line-height:20px;font-size:12.5px;color:#2a2a2a;">0,00</div><div class="t" style="left:1239px;width:105px;text-align:right;top:393px;height:20px;line-height:20px;font-size:12.5px;color:#2a2a2a;">0,00</div><div class="t" style="left:1346px;width:168px;text-align:right;top:393px;height:20px;line-height:20px;font-size:12.5px;color:#2a2a2a;">29520,00</div><div class="r" style="left:1533px;top:396px;width:13px;height:13px;background:#fff;border:1px solid #b8b8b8;box-sizing:border-box;"></div><div class="r" style="left:1239px;top:390px;width:1px;height:26px;background:rgba(205,205,205,0.75);"></div><div class="r" style="left:1346px;top:390px;width:1px;height:26px;background:rgba(205,205,205,0.75);"></div><div class="r" style="left:1516px;top:390px;width:1px;height:26px;background:rgba(205,205,205,0.75);"></div><div class="r" style="left:1562px;top:390px;width:1px;height:26px;background:rgba(205,205,205,0.75);"></div><div class="r" style="left:27px;top:416px;width:1648px;height:26px;background:#ff5e5e;"></div><div class="r" style="left:27px;top:441px;width:1648px;height:1px;background:rgba(255,255,255,0.55);"></div><div class="t" style="left:30px;top:419px;height:20px;line-height:20px;font-size:12.5px;color:#2a2a2a;">FVS/00007/06/2017</div><div class="t" style="left:1129px;width:110px;text-align:right;top:419px;height:20px;line-height:20px;font-size:12.5px;color:#2a2a2a;">2,80</div><div class="t" style="left:1239px;width:105px;text-align:right;top:419px;height:20px;line-height:20px;font-size:12.5px;color:#2a2a2a;">0,00</div><div class="t" style="left:1346px;width:168px;text-align:right;top:419px;height:20px;line-height:20px;font-size:12.5px;color:#2a2a2a;">9052,80</div><div class="r" style="left:1533px;top:422px;width:13px;height:13px;background:#fff;border:1px solid #b8b8b8;box-sizing:border-box;"></div><div class="r" style="left:1239px;top:416px;width:1px;height:26px;background:rgba(205,205,205,0.75);"></div><div class="r" style="left:1346px;top:416px;width:1px;height:26px;background:rgba(205,205,205,0.75);"></div><div class="r" style="left:1516px;top:416px;width:1px;height:26px;background:rgba(205,205,205,0.75);"></div><div class="r" style="left:1562px;top:416px;width:1px;height:26px;background:rgba(205,205,205,0.75);"></div><div class="r" style="left:27px;top:442px;width:1648px;height:26px;background:#fff;"></div><div class="r" style="left:27px;top:467px;width:1648px;height:1px;background:#e4e4e4;"></div><div class="t" style="left:30px;top:445px;height:20px;line-height:20px;font-size:12.5px;color:#2a2a2a;">FVS/00006/09/2017</div><div class="t" style="left:1129px;width:110px;text-align:right;top:445px;height:20px;line-height:20px;font-size:12.5px;color:#2a2a2a;">4,00</div><div class="t" style="left:1239px;width:105px;text-align:right;top:445px;height:20px;line-height:20px;font-size:12.5px;color:#2a2a2a;">0,00</div><div class="t" style="left:1346px;width:168px;text-align:right;top:445px;height:20px;line-height:20px;font-size:12.5px;color:#2a2a2a;">20664,00</div><div class="r" style="left:1533px;top:448px;width:13px;height:13px;background:#fff;border:1px solid #bdbdbd;box-sizing:border-box;"></div><div class="r" style="left:1239px;top:442px;width:1px;height:26px;background:rgba(205,205,205,0.75);"></div><div class="r" style="left:1346px;top:442px;width:1px;height:26px;background:rgba(205,205,205,0.75);"></div><div class="r" style="left:1516px;top:442px;width:1px;height:26px;background:rgba(205,205,205,0.75);"></div><div class="r" style="left:1562px;top:442px;width:1px;height:26px;background:rgba(205,205,205,0.75);"></div><div class="r" style="left:27px;top:468px;width:1648px;height:26px;background:#9be6bc;"></div><div class="r" style="left:27px;top:493px;width:1648px;height:1px;background:rgba(255,255,255,0.45);"></div><div class="t" style="left:30px;top:471px;height:20px;line-height:20px;font-size:12.5px;color:#2a2a2a;">FVS/00006/08/2017</div><div class="t" style="left:1129px;width:110px;text-align:right;top:471px;height:20px;line-height:20px;font-size:12.5px;color:#2a2a2a;">0,81</div><div class="t" style="left:1239px;width:105px;text-align:right;top:471px;height:20px;line-height:20px;font-size:12.5px;color:#2a2a2a;">180,81</div><div class="t" style="left:1346px;width:168px;text-align:right;top:471px;height:20px;line-height:20px;font-size:12.5px;color:#2a2a2a;">0,00</div><div class="r" style="left:1533px;top:474px;width:13px;height:13px;background:#fff;border:1px solid #b8b8b8;box-sizing:border-box;"></div><div class="r" style="left:1239px;top:468px;width:1px;height:26px;background:rgba(205,205,205,0.75);"></div><div class="r" style="left:1346px;top:468px;width:1px;height:26px;background:rgba(205,205,205,0.75);"></div><div class="r" style="left:1516px;top:468px;width:1px;height:26px;background:rgba(205,205,205,0.75);"></div><div class="r" style="left:1562px;top:468px;width:1px;height:26px;background:rgba(205,205,205,0.75);"></div><div class="r" style="left:27px;top:494px;width:1648px;height:26px;background:#9be6bc;"></div><div class="r" style="left:27px;top:519px;width:1648px;height:1px;background:rgba(255,255,255,0.45);"></div><div class="t" style="left:30px;top:497px;height:20px;line-height:20px;font-size:12.5px;color:#2a2a2a;">FVS/00006/07/2017</div><div class="t" style="left:1129px;width:110px;text-align:right;top:497px;height:20px;line-height:20px;font-size:12.5px;color:#2a2a2a;">6,27</div><div class="t" style="left:1239px;width:105px;text-align:right;top:497px;height:20px;line-height:20px;font-size:12.5px;color:#2a2a2a;">306,27</div><div class="t" style="left:1346px;width:168px;text-align:right;top:497px;height:20px;line-height:20px;font-size:12.5px;color:#2a2a2a;">0,00</div><div class="r" style="left:1533px;top:500px;width:13px;height:13px;background:#fff;border:1px solid #b8b8b8;box-sizing:border-box;"></div><div class="r" style="left:1239px;top:494px;width:1px;height:26px;background:rgba(205,205,205,0.75);"></div><div class="r" style="left:1346px;top:494px;width:1px;height:26px;background:rgba(205,205,205,0.75);"></div><div class="r" style="left:1516px;top:494px;width:1px;height:26px;background:rgba(205,205,205,0.75);"></div><div class="r" style="left:1562px;top:494px;width:1px;height:26px;background:rgba(205,205,205,0.75);"></div><div class="r" style="left:27px;top:520px;width:1648px;height:26px;background:#9be6bc;"></div><div class="r" style="left:27px;top:545px;width:1648px;height:1px;background:rgba(255,255,255,0.45);"></div><div class="t" style="left:30px;top:523px;height:20px;line-height:20px;font-size:12.5px;color:#2a2a2a;">FVS/00006/06/2017</div><div class="t" style="left:1129px;width:110px;text-align:right;top:523px;height:20px;line-height:20px;font-size:12.5px;color:#2a2a2a;">3,18</div><div class="t" style="left:1239px;width:105px;text-align:right;top:523px;height:20px;line-height:20px;font-size:12.5px;color:#2a2a2a;">10413,18</div><div class="t" style="left:1346px;width:168px;text-align:right;top:523px;height:20px;line-height:20px;font-size:12.5px;color:#2a2a2a;">0,00</div><div class="r" style="left:1533px;top:526px;width:13px;height:13px;background:#fff;border:1px solid #b8b8b8;box-sizing:border-box;"></div><div class="r" style="left:1239px;top:520px;width:1px;height:26px;background:rgba(205,205,205,0.75);"></div><div class="r" style="left:1346px;top:520px;width:1px;height:26px;background:rgba(205,205,205,0.75);"></div><div class="r" style="left:1516px;top:520px;width:1px;height:26px;background:rgba(205,205,205,0.75);"></div><div class="r" style="left:1562px;top:520px;width:1px;height:26px;background:rgba(205,205,205,0.75);"></div><div class="r" style="left:27px;top:546px;width:1648px;height:26px;background:#9be6bc;"></div><div class="r" style="left:27px;top:571px;width:1648px;height:1px;background:rgba(255,255,255,0.45);"></div><div class="t" style="left:30px;top:549px;height:20px;line-height:20px;font-size:12.5px;color:#2a2a2a;">FVS/00005/06/2017</div><div class="t" style="left:1129px;width:110px;text-align:right;top:549px;height:20px;line-height:20px;font-size:12.5px;color:#2a2a2a;">0,00</div><div class="t" style="left:1239px;width:105px;text-align:right;top:549px;height:20px;line-height:20px;font-size:12.5px;color:#2a2a2a;">2140,00</div><div class="t" style="left:1346px;width:168px;text-align:right;top:549px;height:20px;line-height:20px;font-size:12.5px;color:#2a2a2a;">0,00</div><div class="r" style="left:1533px;top:552px;width:13px;height:13px;background:#fff;border:1px solid #b8b8b8;box-sizing:border-box;"></div><div class="r" style="left:1239px;top:546px;width:1px;height:26px;background:rgba(205,205,205,0.75);"></div><div class="r" style="left:1346px;top:546px;width:1px;height:26px;background:rgba(205,205,205,0.75);"></div><div class="r" style="left:1516px;top:546px;width:1px;height:26px;background:rgba(205,205,205,0.75);"></div><div class="r" style="left:1562px;top:546px;width:1px;height:26px;background:rgba(205,205,205,0.75);"></div></div><svg class="r" style="left:233px;top:272px" width="5" height="8" viewBox="0 0 5 8"><path d="M0 0 L4.5 4 L0 8 Z" fill="#777"/></svg><div class="r" style="left:1897px;top:155px;width:18px;height:697px;background:#f0f0f0;"></div><div class="r" style="left:1898px;top:172px;width:16px;height:322px;background:#cdcdcd;"></div><svg class="r" style="left:1901px;top:159px" width="10" height="8" viewBox="0 0 10 8"><path d="M1.5 6 L5 2.5 L8.5 6" fill="none" stroke="#7a7a7a" stroke-width="1.5"/></svg><div class="r" style="left:1897px;top:835px;width:18px;height:17px;background:#f0f0f0;"></div><svg class="r" style="left:1901px;top:840px" width="10" height="8" viewBox="0 0 10 8"><path d="M1.5 2 L5 5.5 L8.5 2" fill="none" stroke="#7a7a7a" stroke-width="1.5"/></svg><div class="r" style="left:222px;top:819px;width:1675px;height:1px;background:#d0d0d0;"></div><div class="r" style="left:1435px;top:824px;width:25px;height:25px;background:#fff;border:1px solid #c8c8c8;box-sizing:border-box;"></div><div class="t" style="right:464px;top:826.0px;height:20px;line-height:20px;font-size:12.5px;color:#222;">3,40</div><div class="r" style="left:1463px;top:824px;width:104px;height:25px;background:#fff;border:1px solid #c8c8c8;box-sizing:border-box;"></div><div class="t" style="right:357px;top:826.0px;height:20px;line-height:20px;font-size:12.5px;color:#222;">60006,78</div><div class="r" style="left:1570px;top:824px;width:168px;height:25px;background:#fff;border:1px solid #c8c8c8;box-sizing:border-box;"></div><div class="t" style="right:188px;top:826.0px;height:20px;line-height:20px;font-size:12.5px;color:#222;">323551,62</div><div class="r" style="left:222px;top:852px;width:1696px;height:2px;background:#c0c0c0;"></div><div class="r" style="left:249px;top:854px;width:1px;height:64px;background:#d8d8d8;"></div><div class="t" style="left:252px;top:856.0px;height:20px;line-height:20px;font-size:11.5px;color:#333;font-weight:bold;">Nazwa</div><div class="r" style="left:788px;top:854px;width:1px;height:64px;background:#d8d8d8;"></div><div class="t" style="left:791px;top:856.0px;height:20px;line-height:20px;font-size:11.5px;color:#333;font-weight:bold;">Ilość</div><div class="r" style="left:869px;top:854px;width:1px;height:64px;background:#d8d8d8;"></div><div class="t" style="left:872px;top:856.0px;height:20px;line-height:20px;font-size:11.5px;color:#333;font-weight:bold;">VAT</div><div class="r" style="left:948px;top:854px;width:1px;height:64px;background:#d8d8d8;"></div><div class="t" style="left:951px;top:856.0px;height:20px;line-height:20px;font-size:11.5px;color:#333;font-weight:bold;">j.m.</div><div class="r" style="left:1029px;top:854px;width:1px;height:64px;background:#d8d8d8;"></div><div class="t" style="left:1032px;top:856.0px;height:20px;line-height:20px;font-size:11.5px;color:#333;font-weight:bold;">PKWiU</div><div class="r" style="left:1143px;top:854px;width:1px;height:64px;background:#d8d8d8;"></div><div class="t" style="left:1146px;top:856.0px;height:20px;line-height:20px;font-size:11.5px;color:#333;font-weight:bold;">Cena netto</div><div class="r" style="left:1281px;top:854px;width:1px;height:64px;background:#d8d8d8;"></div><div class="t" style="left:1284px;top:856.0px;height:20px;line-height:20px;font-size:11.5px;color:#333;font-weight:bold;">Cena brutto</div><div class="r" style="left:1442px;top:854px;width:1px;height:64px;background:#d8d8d8;"></div><div class="t" style="left:1445px;top:856.0px;height:20px;line-height:20px;font-size:11.5px;color:#333;font-weight:bold;">Wartość netto</div><div class="r" style="left:1595px;top:854px;width:1px;height:64px;background:#d8d8d8;"></div><div class="t" style="left:1598px;top:856.0px;height:20px;line-height:20px;font-size:11.5px;color:#333;font-weight:bold;">Kwota VAT</div><div class="r" style="left:1719px;top:854px;width:1px;height:64px;background:#d8d8d8;"></div><div class="t" style="left:1722px;top:856.0px;height:20px;line-height:20px;font-size:11.5px;color:#333;font-weight:bold;">Wartość brutto</div><div class="r" style="left:1914px;top:853px;width:2px;height:114px;background:#c4c4c4;"></div><div class="r" style="left:222px;top:878px;width:1692px;height:1px;background:#c8c8c8;"></div><div class="t" style="left:252px;top:880.0px;height:20px;line-height:20px;font-size:12.5px;color:#222;">nazwa</div><div class="t" style="left:252px;top:897.0px;height:20px;line-height:20px;font-size:13.33px;color:#222;">dodatkowe baterie</div><svg class="r" style="left:233px;top:894px" width="5" height="8" viewBox="0 0 5 8"><path d="M0 0 L4.5 4 L0 8 Z" fill="#777"/></svg><div class="t" style="right:1053px;top:888.0px;height:20px;line-height:20px;font-size:12.5px;color:#222;">1,00</div><div class="t" style="left:873px;top:888.0px;height:20px;line-height:20px;font-size:12.5px;color:#222;">23</div><div class="t" style="left:952px;top:888.0px;height:20px;line-height:20px;font-size:12.5px;color:#222;">kg</div><div class="t" style="right:642px;top:888.0px;height:20px;line-height:20px;font-size:12.5px;color:#222;">8 000,00</div><div class="t" style="right:480px;top:888.0px;height:20px;line-height:20px;font-size:12.5px;color:#222;">9 840,00</div><div class="t" style="right:328px;top:888.0px;height:20px;line-height:20px;font-size:12.5px;color:#222;">8 000,00</div><div class="t" style="right:204px;top:888.0px;height:20px;line-height:20px;font-size:12.5px;color:#222;">1 840,00</div><div class="t" style="right:9px;top:888.0px;height:20px;line-height:20px;font-size:12.5px;color:#222;">9 840,00</div><div class="r" style="left:249px;top:918px;width:1665px;height:1px;background:#d8d8d8;"></div><div class="r" style="left:222px;top:934px;width:1692px;height:1px;background:#c8c8c8;"></div><div class="r" style="left:1145px;top:939px;width:136px;height:24px;background:#fff;border:1px solid #c8c8c8;box-sizing:border-box;"></div><div class="t" style="right:643px;top:941.0px;height:20px;line-height:20px;font-size:12.5px;color:#222;">8 000,00</div><div class="r" style="left:1283px;top:939px;width:158px;height:24px;background:#fff;border:1px solid #c8c8c8;box-sizing:border-box;"></div><div class="t" style="right:483px;top:941.0px;height:20px;line-height:20px;font-size:12.5px;color:#222;">9 840,00</div><div class="r" style="left:1444px;top:939px;width:150px;height:24px;background:#fff;border:1px solid #c8c8c8;box-sizing:border-box;"></div><div class="t" style="right:330px;top:941.0px;height:20px;line-height:20px;font-size:12.5px;color:#222;">8 000,00</div><div class="r" style="left:1721px;top:939px;width:192px;height:24px;background:#fff;border:1px solid #c8c8c8;box-sizing:border-box;"></div><div class="t" style="right:11px;top:941.0px;height:20px;line-height:20px;font-size:12.5px;color:#222;">9 840,00</div><div class="r" style="left:222px;top:967px;width:1692px;height:2px;background:#c0c0c0;"></div><div class="t" style="left:227px;top:971.0px;height:20px;line-height:20px;font-size:11.66px;color:#333;">Wyświetlonych faktur: 42</div><div class="r" style="left:220px;top:991px;width:1698px;height:1px;background:#d0d0d0;"></div><div class="r" style="left:220px;top:993px;width:1698px;height:1px;background:#e0e0e0;"></div><div class="t" style="left:225px;top:994.0px;height:20px;line-height:20px;font-size:11.65px;color:#222;">Zarządzanie projektami w Belisama. Sprawdź jakie to proste. Więcej &gt;&gt;</div><div class="r" style="left:483px;top:170px;width:953px;height:693px;background:#fff;border:1px solid #c4c4c4;border-top-color:#8a8a8a;border-left-color:#a8a8a8;border-bottom-color:#9a9a9a;box-sizing:border-box;box-shadow:0 3px 13px 1px rgba(0,0,0,0.24);"></div><svg class="r" style="left:492px;top:177px" width="16" height="16" viewBox="0 0 16 16"><rect width="16" height="16" fill="#1f2128"/><path d="M0 2.2 H5.2 C7.5 2.2 8.6 3.4 8.6 5 C8.6 6.2 8 7.1 7.1 7.6 C8.5 8 9.3 9.2 9.3 10.7 C9.3 12.8 7.8 13.9 5.6 13.9 H0 Z" fill="#fff"/><rect x="2.1" y="4" width="3.5" height="2.6" rx="0.7" fill="#1f2128"/><rect x="2.1" y="8.6" width="3.9" height="2.9" rx="0.8" fill="#1f2128"/><circle cx="13.3" cy="12.4" r="1.2" fill="#d0704a"/></svg><div class="t" style="left:513px;top:176.0px;height:20px;line-height:20px;font-size:11.6px;color:#9a9a9a;">Edycja faktury sprzedażowej</div><svg class="r" style="left:1250px;top:177.5px" width="11" height="7" viewBox="0 0 11 7"><path d="M0 3.5 L3.2 0.3 V2.4 H7.8 V0.3 L11 3.5 L7.8 6.7 V4.6 H3.2 V6.7 Z" fill="#111"/></svg><div class="r" style="left:1316px;top:185px;width:11px;height:1px;background:#9a9a9a;"></div><div class="r" style="left:1361px;top:180px;width:10px;height:10px;border:1px solid #dcdcdc;box-sizing:border-box;"></div><svg class="r" style="left:1407px;top:180px" width="10" height="10" viewBox="0 0 10 10"><path d="M0.3 0.3 L9.7 9.7 M9.7 0.3 L0.3 9.7" stroke="#666" stroke-width="1.1"/></svg><div class="r" style="left:485px;top:201px;width:949px;height:1px;background:#e3e3e3;"></div><div class="t" style="left:502px;top:211.0px;height:20px;line-height:20px;font-size:11.17px;color:#333;font-weight:bold;">Typ dokumentu:</div><div class="r" style="left:622px;top:211px;width:138px;height:20px;background:#e8e8e8;border:1px solid #b0b0b0;box-sizing:border-box;"></div><div class="r" style="left:743px;top:212px;width:16px;height:18px;background:#ececec;border-left:1px solid #b0b0b0;box-sizing:border-box;"></div><svg class="r" style="left:746.0px;top:217.0px" width="10" height="8" viewBox="0 0 10 8"><path d="M2 2.2 L5 5.2 L8 2.2" fill="none" stroke="#7a7a7a" stroke-width="1.9"/></svg><div class="t" style="left:626px;top:211.0px;height:20px;line-height:20px;font-size:11px;color:#222;">Faktura VAT</div><div class="t" style="left:791px;top:211.0px;height:20px;line-height:20px;font-size:11px;color:#333;font-weight:bold;">Seria:</div><div class="r" style="left:833px;top:211px;width:72px;height:21px;background:#ededed;border:1px solid #7a7a7a;box-sizing:border-box;"></div><div class="t" style="left:837px;top:211.0px;height:20px;line-height:20px;font-size:11px;color:#222;">FVS</div><div class="t" style="left:914px;top:211.0px;height:20px;line-height:20px;font-size:11px;color:#333;font-weight:bold;">Nr:</div><div class="r" style="left:939px;top:211px;width:123px;height:21px;background:#ededed;border:1px solid #7a7a7a;box-sizing:border-box;"></div><div class="r" style="left:489px;top:250px;width:573px;height:121px;border:1px solid #dcdcdc;box-sizing:border-box;"></div><div class="r" style="left:496px;top:240px;width:64px;height:18px;background:#fff;"></div><div class="t" style="left:500px;top:239.0px;height:20px;line-height:20px;font-size:11.04px;color:#444;">Kontrahent</div><div class="t" style="left:502px;top:261.0px;height:20px;line-height:20px;font-size:10.88px;color:#333;font-weight:bold;">Nazwa:</div><div class="r" style="left:586px;top:261px;width:404px;height:20px;background:#e6e6e6;border:1px solid #b0b0b0;box-sizing:border-box;"></div><div class="r" style="left:973px;top:262px;width:16px;height:18px;background:#e6e6e6;border-left:1px solid #b0b0b0;box-sizing:border-box;"></div><svg class="r" style="left:976.0px;top:267.0px" width="10" height="8" viewBox="0 0 10 8"><path d="M2 2.2 L5 5.2 L8 2.2" fill="none" stroke="#7a7a7a" stroke-width="1.9"/></svg><div class="t" style="left:590px;top:261.0px;height:20px;line-height:20px;font-size:11px;color:#222;">ABC Twoje Biuro</div><div class="r" style="left:996px;top:259px;width:26px;height:26px;background:#fff;border:1px solid #f2a941;box-sizing:border-box;"></div><div class="t" style="left:1009px;top:261.0px;height:20px;line-height:20px;font-size:12px;color:#333;font-weight:bold;transform:translateX(-50%);">...</div><div class="r" style="left:1028px;top:259px;width:26px;height:26px;background:#fff;border:1px solid #f2a941;box-sizing:border-box;"></div><div class="r" style="left:1035.0px;top:270.8px;width:12.0px;height:2.3999999999999773px;background:#f26a1b;"></div><div class="r" style="left:1039.8px;top:266.0px;width:2.400000000000091px;height:12.0px;background:#f26a1b;"></div><div class="t" style="left:502px;top:287.0px;height:20px;line-height:20px;font-size:10.57px;color:#333;font-weight:bold;">Miejscowość:</div><div class="r" style="left:586px;top:287px;width:115px;height:21px;background:#ececec;border:1px solid #7a7a7a;box-sizing:border-box;"></div><div class="t" style="left:590px;top:287.0px;height:20px;line-height:20px;font-size:11px;color:#222;">80-232</div><div class="r" style="left:707px;top:287px;width:347px;height:21px;background:#ececec;border:1px solid #7a7a7a;box-sizing:border-box;"></div><div class="t" style="left:711px;top:287.0px;height:20px;line-height:20px;font-size:11px;color:#222;">Gdańsk</div><div class="t" style="left:502px;top:313.0px;height:20px;line-height:20px;font-size:11px;color:#333;font-weight:bold;">Adres:</div><div class="r" style="left:586px;top:313px;width:468px;height:21px;background:#ececec;border:1px solid #7a7a7a;box-sizing:border-box;"></div><div class="t" style="left:590px;top:313.0px;height:20px;line-height:20px;font-size:11px;color:#222;">Kuźnicza 25/12</div><div class="t" style="left:502px;top:339.0px;height:20px;line-height:20px;font-size:11px;color:#333;font-weight:bold;">NIP:</div><div class="r" style="left:586px;top:339px;width:196px;height:21px;background:#ececec;border:1px solid #7a7a7a;box-sizing:border-box;"></div><div class="t" style="left:590px;top:339.0px;height:20px;line-height:20px;font-size:11px;color:#222;">738-46-23-111</div><div class="t" style="left:801px;top:339.0px;height:20px;line-height:20px;font-size:10.74px;color:#333;font-weight:bold;">Projekt:</div><div class="r" style="left:856px;top:339px;width:198px;height:21px;background:#fff;border:1px solid #b0b0b0;box-sizing:border-box;"></div><div class="r" style="left:1037px;top:340px;width:16px;height:19px;background:#ececec;border-left:1px solid #b0b0b0;box-sizing:border-box;"></div><svg class="r" style="left:1040.0px;top:345.5px" width="10" height="8" viewBox="0 0 10 8"><path d="M2 2.2 L5 5.2 L8 2.2" fill="none" stroke="#7a7a7a" stroke-width="1.9"/></svg><div class="t" style="left:860px;top:339.0px;height:20px;line-height:20px;font-size:11px;color:#222;">Brak</div><div class="r" style="left:1068px;top:219px;width:362px;height:152px;border:1px solid #dcdcdc;box-sizing:border-box;"></div><div class="r" style="left:1074px;top:208px;width:116px;height:20px;background:#fff;"></div><div class="t" style="left:1079px;top:208.0px;height:20px;line-height:20px;font-size:10.82px;color:#444;">Dodatkowe informacje</div><div class="t" style="left:1081px;top:235.0px;height:20px;line-height:20px;font-size:10.91px;color:#333;font-weight:bold;">Data wystawienia:</div><div class="r" style="left:1194px;top:235px;width:231px;height:20px;background:#fff;border:1px solid #a8a8a8;box-sizing:border-box;"></div><div class="r" style="left:1408px;top:236px;width:16px;height:18px;background:#ececec;border-left:1px solid #a8a8a8;box-sizing:border-box;"></div><svg class="r" style="left:1411.0px;top:241.0px" width="10" height="8" viewBox="0 0 10 8"><path d="M2 2.2 L5 5.2 L8 2.2" fill="none" stroke="#7a7a7a" stroke-width="1.9"/></svg><div class="t" style="left:1198px;top:235.0px;height:20px;line-height:20px;font-size:10.7px;color:#222;">02.10.2017</div><div class="t" style="left:1081px;top:261.0px;height:20px;line-height:20px;font-size:11px;color:#333;font-weight:bold;">Data sprzedaży:</div><div class="r" style="left:1194px;top:261px;width:231px;height:20px;background:#fff;border:1px solid #a8a8a8;box-sizing:border-box;"></div><div class="r" style="left:1408px;top:262px;width:16px;height:18px;background:#ececec;border-left:1px solid #a8a8a8;box-sizing:border-box;"></div><svg class="r" style="left:1411.0px;top:267.0px" width="10" height="8" viewBox="0 0 10 8"><path d="M2 2.2 L5 5.2 L8 2.2" fill="none" stroke="#7a7a7a" stroke-width="1.9"/></svg><div class="t" style="left:1198px;top:261.0px;height:20px;line-height:20px;font-size:10.7px;color:#222;">02.10.2017</div><div class="t" style="left:1081px;top:287.0px;height:20px;line-height:20px;font-size:10.44px;color:#333;font-weight:bold;">Płatność:</div><div class="r" style="left:1194px;top:287px;width:231px;height:20px;background:#e6e6e6;border:1px solid #a8a8a8;box-sizing:border-box;"></div><div class="r" style="left:1408px;top:288px;width:16px;height:18px;background:#e6e6e6;border-left:1px solid #a8a8a8;box-sizing:border-box;"></div><svg class="r" style="left:1411.0px;top:293.0px" width="10" height="8" viewBox="0 0 10 8"><path d="M2 2.2 L5 5.2 L8 2.2" fill="none" stroke="#7a7a7a" stroke-width="1.9"/></svg><div class="t" style="left:1198px;top:287.0px;height:20px;line-height:20px;font-size:10px;color:#222;">PRZELEW</div><div class="t" style="left:1081px;top:313.0px;height:20px;line-height:20px;font-size:10.58px;color:#333;font-weight:bold;">Termin:</div><div class="r" style="left:1194px;top:312px;width:56px;height:20px;background:#fff;border:1px solid #a8a8a8;box-sizing:border-box;"></div><div class="t" style="left:1198px;top:312.0px;height:20px;line-height:20px;font-size:11px;color:#222;">7</div><div class="t" style="left:1260px;top:313.0px;height:20px;line-height:20px;font-size:12.29px;color:#333;">dni</div><div class="r" style="left:1283px;top:313px;width:142px;height:20px;background:#fff;border:1px solid #a8a8a8;box-sizing:border-box;"></div><div class="r" style="left:1408px;top:314px;width:16px;height:18px;background:#ececec;border-left:1px solid #a8a8a8;box-sizing:border-box;"></div><svg class="r" style="left:1411.0px;top:319.0px" width="10" height="8" viewBox="0 0 10 8"><path d="M2 2.2 L5 5.2 L8 2.2" fill="none" stroke="#7a7a7a" stroke-width="1.9"/></svg><div class="t" style="left:1287px;top:313.0px;height:20px;line-height:20px;font-size:10.7px;color:#222;">09.10.2017</div><div class="t" style="left:1081px;top:339.0px;height:20px;line-height:20px;font-size:11px;color:#333;font-weight:bold;">Waluta:</div><div class="r" style="left:1194px;top:339px;width:56px;height:20px;background:#ececec;border:1px solid #c0c0c0;box-sizing:border-box;"></div><div class="r" style="left:1233px;top:340px;width:16px;height:18px;background:#ececec;border-left:1px solid #c0c0c0;box-sizing:border-box;"></div><svg class="r" style="left:1236.0px;top:345.0px" width="10" height="8" viewBox="0 0 10 8"><path d="M2 2.2 L5 5.2 L8 2.2" fill="none" stroke="#bbb" stroke-width="1.9"/></svg><div class="t" style="left:1198px;top:339.0px;height:20px;line-height:20px;font-size:10.5px;color:#a0a0a0;">PLN</div><div class="t" style="left:1283px;top:339.0px;height:20px;line-height:20px;font-size:11px;color:#333;font-weight:bold;">Kurs:</div><div class="r" style="left:1336px;top:339px;width:89px;height:20px;background:#e6e6e6;border:1px solid #b8b8b8;box-sizing:border-box;"></div><div class="t" style="left:1340px;top:339.0px;height:20px;line-height:20px;font-size:10.5px;color:#9a9a9a;">1,0000</div><div class="r" style="left:486px;top:376px;width:946px;height:260px;border-top:1px solid #e0e0e0;box-sizing:border-box;"></div><div class="r" style="left:502px;top:380px;width:26px;height:25px;background:#fff;border:1px solid #f2a941;box-sizing:border-box;"></div><div class="r" style="left:508.5px;top:391.3px;width:13.0px;height:2.3999999999999773px;background:#f26a1b;"></div><div class="r" style="left:513.8px;top:386.0px;width:2.400000000000091px;height:13.0px;background:#f26a1b;"></div><div class="r" style="left:534px;top:380px;width:26px;height:25px;background:#fff;border:1px solid #f2a941;box-sizing:border-box;"></div><div class="r" style="left:540px;top:391.3px;width:14px;height:2.3999999999999773px;background:#f26a1b;"></div><div class="r" style="left:486px;top:409px;width:946px;height:1px;background:#d4d4d4;"></div><div class="r" style="left:486px;top:376px;width:1px;height:34px;background:#dcdcdc;"></div><div class="r" style="left:512px;top:410px;width:1px;height:50px;background:#d8d8d8;"></div><div class="t" style="left:516px;top:412.0px;height:20px;line-height:20px;font-size:11.57px;color:#333;font-weight:bold;">Nazwa</div><div class="r" style="left:1256px;top:410px;width:1px;height:24px;background:#d8d8d8;"></div><div class="r" style="left:1324px;top:410px;width:1px;height:24px;background:#d8d8d8;"></div><div class="t" style="right:666px;top:412.0px;height:20px;line-height:20px;font-size:12px;color:#333;font-weight:bold;">t...</div><div class="t" style="left:1260px;top:412.0px;height:20px;line-height:20px;font-size:11.91px;color:#333;font-weight:bold;">Kwota V...</div><div class="t" style="left:1328px;top:412.0px;height:20px;line-height:20px;font-size:11.93px;color:#333;font-weight:bold;">Wartość brutto</div><div class="r" style="left:486px;top:434px;width:946px;height:1px;background:#c8c8c8;"></div><div class="r" style="left:512px;top:434px;width:920px;height:26px;background:#e3e3e3;"></div><div class="r" style="left:1256px;top:434px;width:1px;height:26px;background:#d0d0d0;"></div><div class="r" style="left:1324px;top:434px;width:1px;height:26px;background:#d0d0d0;"></div><div class="t" style="left:516px;top:437.5px;height:20px;line-height:20px;font-size:12.32px;color:#222;">System Belisama</div><div class="t" style="right:667px;top:438.0px;height:20px;line-height:20px;font-size:12.5px;color:#222;">00</div><div class="t" style="right:599px;top:438.0px;height:20px;line-height:20px;font-size:12.41px;color:#222;">5 520,00</div><div class="t" style="right:490px;top:438.0px;height:20px;line-height:20px;font-size:12.54px;color:#222;">29 520,00</div><svg class="r" style="left:497px;top:443px" width="5" height="8" viewBox="0 0 5 8"><path d="M0 0 L4.5 4 L0 8 Z" fill="#777"/></svg><div class="r" style="left:486px;top:635px;width:946px;height:1px;background:#a8a8a8;"></div><div class="r" style="left:1009px;top:640px;width:74px;height:25px;background:#fff;border:1px solid #b8b8b8;box-sizing:border-box;"></div><div class="t" style="right:841px;top:642.0px;height:20px;line-height:20px;font-size:12.5px;color:#555;">1 200,00</div><div class="r" style="left:1085px;top:640px;width:87px;height:25px;background:#fff;border:1px solid #b8b8b8;box-sizing:border-box;"></div><div class="t" style="right:752px;top:642.0px;height:20px;line-height:20px;font-size:12.5px;color:#555;">4 470,00</div><div class="r" style="left:1174px;top:640px;width:82px;height:25px;background:#fff;border:1px solid #b8b8b8;box-sizing:border-box;"></div><div class="t" style="right:668px;top:642.0px;height:20px;line-height:20px;font-size:12.5px;color:#555;">24 000,00</div><div class="r" style="left:1326px;top:640px;width:105px;height:25px;background:#fff;border:1px solid #b8b8b8;box-sizing:border-box;"></div><div class="t" style="right:494px;top:642.0px;height:20px;line-height:20px;font-size:12.5px;color:#222;">29 520,00</div><div class="t" style="left:496px;top:674.0px;height:20px;line-height:20px;font-size:10.99px;color:#333;font-weight:bold;">Dodatkowy tekst na fakturze:</div><div class="r" style="left:674px;top:674px;width:749px;height:20px;background:#fff;border:1px solid #a8a8a8;box-sizing:border-box;"></div><div class="t" style="left:678px;top:674.0px;height:20px;line-height:20px;font-size:11.7px;color:#222;">Potwierdzam odbiór towaru/usługi wg powyższej specyfikacji</div><div class="t" style="left:496px;top:700.0px;height:20px;line-height:20px;font-size:10.99px;color:#333;font-weight:bold;">Dodatkowy tekst na fakturze:</div><div class="r" style="left:674px;top:700px;width:749px;height:20px;background:#fff;border:1px solid #a8a8a8;box-sizing:border-box;"></div><div class="t" style="left:678px;top:700.0px;height:20px;line-height:20px;font-size:11.7px;color:#222;">Po przekroczeniu terminu płatności zostaną naliczone ustawowe odsetki</div><div class="t" style="left:496px;top:726.0px;height:20px;line-height:20px;font-size:11px;color:#333;font-weight:bold;">Uwagi:</div><div class="r" style="left:674px;top:726px;width:749px;height:48px;background:#fff;border:1px solid #a8a8a8;box-sizing:border-box;"></div><div class="r" style="left:1404px;top:727px;width:18px;height:46px;background:#f6f6f6;"></div><svg class="r" style="left:1408px;top:733px" width="10" height="8" viewBox="0 0 10 8"><path d="M1.5 6 L5 2.5 L8.5 6" fill="none" stroke="#c8c8c8" stroke-width="1.3"/></svg><svg class="r" style="left:1408px;top:760px" width="10" height="8" viewBox="0 0 10 8"><path d="M1.5 2 L5 5.5 L8.5 2" fill="none" stroke="#c8c8c8" stroke-width="1.3"/></svg><div class="t" style="left:496px;top:780.0px;height:20px;line-height:20px;font-size:11.01px;color:#333;font-weight:bold;">Wystawił(a):</div><div class="r" style="left:674px;top:780px;width:277px;height:20px;background:#fff;border:1px solid #a8a8a8;box-sizing:border-box;"></div><div class="t" style="left:678px;top:780.0px;height:20px;line-height:20px;font-size:11.2px;color:#222;">Maciej mp</div><div class="r" style="left:496px;top:810px;width:84px;height:42px;background:#fff;border:1px solid #f2a941;box-sizing:border-box;"></div><div class="t" style="left:538px;top:821.0px;height:20px;line-height:20px;font-size:12px;color:#333;transform:translateX(-50%);">Drukuj</div><div class="r" style="left:957px;top:810px;width:115px;height:42px;background:#fff;border:1px solid #f2a941;box-sizing:border-box;"></div><div class="t" style="left:1014.5px;top:821.0px;height:20px;line-height:20px;font-size:12px;color:#333;transform:translateX(-50%);">Wystaw WZ</div><div class="r" style="left:1155px;top:810px;width:131px;height:42px;background:#f4f4f4;border:1px solid #f2a941;box-sizing:border-box;"></div><svg class="r" style="left:1160px;top:820px" width="26" height="22" viewBox="0 0 26 22"><path d="M1 12 L9 20 L25 3 L21 0.5 L9 13 L5 8.5 Z" fill="#2cc36b"/></svg><div class="t" style="left:1237px;top:821.0px;height:20px;line-height:20px;font-size:12px;color:#333;transform:translateX(-50%);">Zapisz</div><div class="r" style="left:1292px;top:810px;width:131px;height:42px;background:#fff;border:1px solid #f2a941;box-sizing:border-box;"></div><svg class="r" style="left:1300px;top:821px" width="20" height="20" viewBox="0 0 20 20"><path d="M0 3.6 L3.6 0 L10 6.4 L16.4 0 L20 3.6 L13.6 10 L20 16.4 L16.4 20 L10 13.6 L3.6 20 L0 16.4 L6.4 10 Z" fill="#e74c3c"/></svg><div class="t" style="left:1373px;top:821.0px;height:20px;line-height:20px;font-size:12px;color:#333;transform:translateX(-50%);">Anuluj</div><div class="r" style="left:679px;top:377px;width:563px;height:277px;background:#fff;border:1px solid #d4d4d4;box-sizing:border-box;box-shadow:0 3px 14px 2px rgba(0,0,0,0.26);"></div><svg class="r" style="left:687px;top:384px" width="16" height="16" viewBox="0 0 16 16"><rect width="16" height="16" fill="#1f2128"/><path d="M0 2.2 H5.2 C7.5 2.2 8.6 3.4 8.6 5 C8.6 6.2 8 7.1 7.1 7.6 C8.5 8 9.3 9.2 9.3 10.7 C9.3 12.8 7.8 13.9 5.6 13.9 H0 Z" fill="#fff"/><rect x="2.1" y="4" width="3.5" height="2.6" rx="0.7" fill="#1f2128"/><rect x="2.1" y="8.6" width="3.9" height="2.9" rx="0.8" fill="#1f2128"/><circle cx="13.3" cy="12.4" r="1.2" fill="#d0704a"/></svg><div class="t" style="left:709px;top:382.0px;height:20px;line-height:20px;font-size:12.03px;color:#111;">Drukowanie faktury</div><svg class="r" style="left:1104px;top:384.5px" width="11" height="7" viewBox="0 0 11 7"><path d="M0 3.5 L3.2 0.3 V2.4 H7.8 V0.3 L11 3.5 L7.8 6.7 V4.6 H3.2 V6.7 Z" fill="#111"/></svg><div class="r" style="left:1122px;top:392px;width:10px;height:1px;background:#d8d8d8;"></div><div class="r" style="left:1167px;top:387px;width:11px;height:11px;border:1px solid #111;box-sizing:border-box;"></div><svg class="r" style="left:1213px;top:387px" width="10.5" height="10.5" viewBox="0 0 10.5 10.5"><path d="M0.3 0.3 L10.2 10.2 M10.2 0.3 L0.3 10.2" stroke="#111" stroke-width="1.2"/></svg><div class="r" style="left:680px;top:408px;width:560px;height:1px;background:#e3e3e3;"></div><div class="t" style="left:730px;top:420.0px;height:20px;line-height:20px;font-size:11.31px;color:#3a3a3a;">Drukarka:</div><div class="r" style="left:783px;top:420px;width:283px;height:20px;background:#fff;border:1px solid #a8a8a8;box-sizing:border-box;"></div><div class="r" style="left:1049px;top:421px;width:16px;height:18px;background:#ececec;border-left:1px solid #a8a8a8;box-sizing:border-box;"></div><svg class="r" style="left:1052.0px;top:426.0px" width="10" height="8" viewBox="0 0 10 8"><path d="M2 2.2 L5 5.2 L8 2.2" fill="none" stroke="#7a7a7a" stroke-width="1.9"/></svg><div class="t" style="left:787px;top:420.0px;height:20px;line-height:20px;font-size:10.6px;color:#222;">OKI-B431-F60B0C</div><div class="r" style="left:719px;top:462.5px;width:13px;height:13.0px;background:#fff;border:1px solid #a8a8a8;box-sizing:border-box;"></div><div class="t" style="left:736px;top:459.0px;height:20px;line-height:20px;font-size:12px;color:#3a3a3a;">Oryginał</div><div class="t" style="left:842px;top:459.0px;height:20px;line-height:20px;font-size:11.67px;color:#3a3a3a;">liczba kopii:</div><div class="r" style="left:904px;top:459.5px;width:46px;height:19.0px;background:#fff;border:1px solid #a8a8a8;box-sizing:border-box;"></div><div class="r" style="left:933px;top:460.5px;width:16px;height:17.0px;background:#f0f0f0;border-left:1px solid #c8c8c8;box-sizing:border-box;"></div><svg class="r" style="left:937px;top:461px" width="9" height="16" viewBox="0 0 9 16"><path d="M1.5 5.5 L4.5 2.5 L7.5 5.5 M1.5 10.5 L4.5 13.5 L7.5 10.5" fill="none" stroke="#8a8a8a" stroke-width="1.2"/></svg><div class="t" style="right:989px;top:459.0px;height:20px;line-height:20px;font-size:12px;color:#3a3a3a;">1</div><div class="r" style="left:975px;top:462.5px;width:13px;height:13.0px;background:#fff;border:1px solid #a8a8a8;box-sizing:border-box;"></div><div class="t" style="left:992px;top:459.0px;height:20px;line-height:20px;font-size:11.39px;color:#3a3a3a;">Export do pliku PDF</div><div class="r" style="left:1122px;top:462.5px;width:13px;height:13.0px;background:#fff;border:1px solid #a8a8a8;box-sizing:border-box;"></div><svg class="r" style="left:1122px;top:462.5px" width="13" height="13" viewBox="0 0 13 13"><path d="M2.5 6.5 L5.2 9.3 L10.5 3.2" fill="none" stroke="#333" stroke-width="1.5"/></svg><div class="t" style="left:1139px;top:459.0px;height:20px;line-height:20px;font-size:11.16px;color:#3a3a3a;">Wyślij e-mailem</div><div class="r" style="left:719px;top:488.5px;width:13px;height:13.0px;background:#fff;border:1px solid #a8a8a8;box-sizing:border-box;"></div><div class="t" style="left:736px;top:485.0px;height:20px;line-height:20px;font-size:12px;color:#3a3a3a;">Kopia</div><div class="t" style="left:842px;top:485.0px;height:20px;line-height:20px;font-size:11.67px;color:#3a3a3a;">liczba kopii:</div><div class="r" style="left:904px;top:485.5px;width:46px;height:19.0px;background:#fff;border:1px solid #a8a8a8;box-sizing:border-box;"></div><div class="r" style="left:933px;top:486.5px;width:16px;height:17.0px;background:#f0f0f0;border-left:1px solid #c8c8c8;box-sizing:border-box;"></div><svg class="r" style="left:937px;top:487px" width="9" height="16" viewBox="0 0 9 16"><path d="M1.5 5.5 L4.5 2.5 L7.5 5.5 M1.5 10.5 L4.5 13.5 L7.5 10.5" fill="none" stroke="#8a8a8a" stroke-width="1.2"/></svg><div class="t" style="right:989px;top:485.0px;height:20px;line-height:20px;font-size:12px;color:#3a3a3a;">1</div><div class="r" style="left:975px;top:488.5px;width:13px;height:13.0px;background:#fff;border:1px solid #a8a8a8;box-sizing:border-box;"></div><div class="t" style="left:992px;top:485.0px;height:20px;line-height:20px;font-size:11.39px;color:#3a3a3a;">Export do pliku PDF</div><div class="r" style="left:1122px;top:488.5px;width:13px;height:13.0px;background:#fff;border:1px solid #a8a8a8;box-sizing:border-box;"></div><div class="t" style="left:1139px;top:485.0px;height:20px;line-height:20px;font-size:11.16px;color:#3a3a3a;">Wyślij e-mailem</div><div class="r" style="left:719px;top:515.0px;width:13px;height:13.0px;background:#fff;border:1px solid #a8a8a8;box-sizing:border-box;"></div><div class="t" style="left:736px;top:511.5px;height:20px;line-height:20px;font-size:12px;color:#3a3a3a;">Duplikat oryginał</div><div class="t" style="left:842px;top:511.5px;height:20px;line-height:20px;font-size:11.67px;color:#3a3a3a;">liczba kopii:</div><div class="r" style="left:904px;top:512.0px;width:46px;height:19.0px;background:#fff;border:1px solid #a8a8a8;box-sizing:border-box;"></div><div class="r" style="left:933px;top:513.0px;width:16px;height:17.0px;background:#f0f0f0;border-left:1px solid #c8c8c8;box-sizing:border-box;"></div><svg class="r" style="left:937px;top:513.5px" width="9" height="16" viewBox="0 0 9 16"><path d="M1.5 5.5 L4.5 2.5 L7.5 5.5 M1.5 10.5 L4.5 13.5 L7.5 10.5" fill="none" stroke="#8a8a8a" stroke-width="1.2"/></svg><div class="t" style="right:989px;top:511.5px;height:20px;line-height:20px;font-size:12px;color:#3a3a3a;">1</div><div class="r" style="left:975px;top:515.0px;width:13px;height:13.0px;background:#fff;border:1px solid #a8a8a8;box-sizing:border-box;"></div><div class="t" style="left:992px;top:511.5px;height:20px;line-height:20px;font-size:11.39px;color:#3a3a3a;">Export do pliku PDF</div><div class="r" style="left:1122px;top:515.0px;width:13px;height:13.0px;background:#fff;border:1px solid #a8a8a8;box-sizing:border-box;"></div><div class="t" style="left:1139px;top:511.5px;height:20px;line-height:20px;font-size:11.16px;color:#3a3a3a;">Wyślij e-mailem</div><div class="r" style="left:719px;top:541.0px;width:13px;height:13.0px;background:#fff;border:1px solid #a8a8a8;box-sizing:border-box;"></div><div class="t" style="left:736px;top:537.5px;height:20px;line-height:20px;font-size:12px;color:#3a3a3a;">Duplikat kopia</div><div class="t" style="left:842px;top:537.5px;height:20px;line-height:20px;font-size:11.67px;color:#3a3a3a;">liczba kopii:</div><div class="r" style="left:904px;top:538.0px;width:46px;height:19.0px;background:#fff;border:1px solid #a8a8a8;box-sizing:border-box;"></div><div class="r" style="left:933px;top:539.0px;width:16px;height:17.0px;background:#f0f0f0;border-left:1px solid #c8c8c8;box-sizing:border-box;"></div><svg class="r" style="left:937px;top:539.5px" width="9" height="16" viewBox="0 0 9 16"><path d="M1.5 5.5 L4.5 2.5 L7.5 5.5 M1.5 10.5 L4.5 13.5 L7.5 10.5" fill="none" stroke="#8a8a8a" stroke-width="1.2"/></svg><div class="t" style="right:989px;top:537.5px;height:20px;line-height:20px;font-size:12px;color:#3a3a3a;">1</div><div class="r" style="left:975px;top:541.0px;width:13px;height:13.0px;background:#fff;border:1px solid #a8a8a8;box-sizing:border-box;"></div><div class="t" style="left:992px;top:537.5px;height:20px;line-height:20px;font-size:11.39px;color:#3a3a3a;">Export do pliku PDF</div><div class="r" style="left:1122px;top:541.0px;width:13px;height:13.0px;background:#fff;border:1px solid #a8a8a8;box-sizing:border-box;"></div><div class="t" style="left:1139px;top:537.5px;height:20px;line-height:20px;font-size:11.16px;color:#3a3a3a;">Wyślij e-mailem</div><div class="t" style="left:735px;top:566.0px;height:20px;line-height:20px;font-size:10.61px;color:#3a3a3a;">E-mail:</div><div class="r" style="left:788px;top:566px;width:283px;height:20px;background:#fff;border:1px solid #a8a8a8;box-sizing:border-box;"></div><div class="r" style="left:1054px;top:567px;width:16px;height:18px;background:#ececec;border-left:1px solid #a8a8a8;box-sizing:border-box;"></div><svg class="r" style="left:1057.0px;top:572.0px" width="10" height="8" viewBox="0 0 10 8"><path d="M2 2.2 L5 5.2 L8 2.2" fill="none" stroke="#7a7a7a" stroke-width="1.9"/></svg><div class="r" style="left:790px;top:569px;width:139px;height:14px;background:#0078d7;"></div><div class="t" style="left:790px;top:566.0px;height:20px;line-height:20px;font-size:11.95px;color:#fff;">wachowicz@twojebiuro.pl</div><div class="r" style="left:961px;top:600px;width:131px;height:42px;background:#fff;border:1px solid #f2a941;box-sizing:border-box;"></div><svg class="r" style="left:966px;top:610px" width="26" height="22" viewBox="0 0 26 22"><path d="M1 12 L9 20 L25 3 L21 0.5 L9 13 L5 8.5 Z" fill="#2cc36b"/></svg><div class="t" style="left:1042px;top:611.0px;height:20px;line-height:20px;font-size:12px;color:#3a3a3a;transform:translateX(-50%);">OK</div><div class="r" style="left:1098px;top:600px;width:131px;height:42px;background:#fff;border:1px solid #f2a941;box-sizing:border-box;"></div><svg class="r" style="left:1106px;top:611px" width="20" height="20" viewBox="0 0 20 20"><path d="M0 3.6 L3.6 0 L10 6.4 L16.4 0 L20 3.6 L13.6 10 L20 16.4 L16.4 20 L10 13.6 L3.6 20 L0 16.4 L6.4 10 Z" fill="#e74c3c"/></svg><div class="t" style="left:1180px;top:611.0px;height:20px;line-height:20px;font-size:12px;color:#3a3a3a;transform:translateX(-50%);">Anuluj</div>
</body></html>
